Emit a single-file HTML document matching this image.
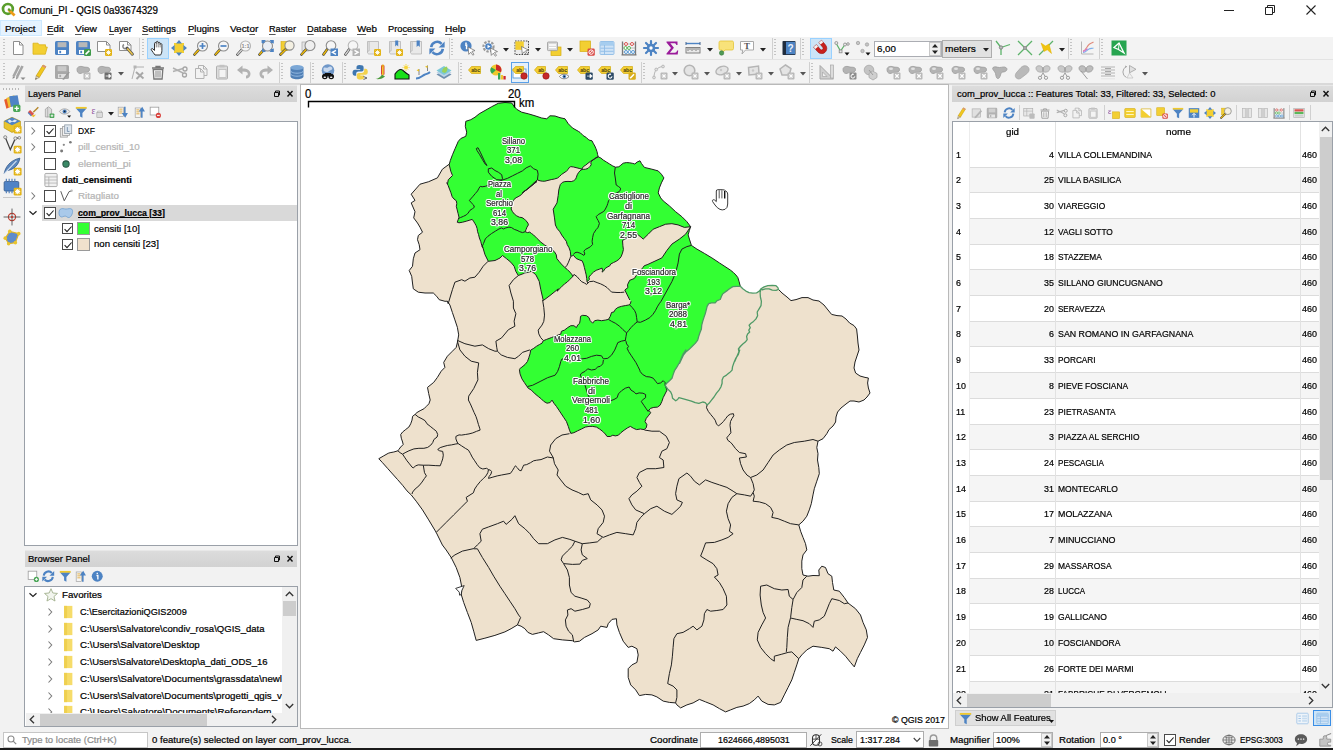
<!DOCTYPE html>
<html lang="en"><head><meta charset="utf-8"><title>Comuni_PI - QGIS 0a93674329</title>
<style>
html,body{margin:0;padding:0;background:#f2f2f2;}
body{width:1333px;height:750px;overflow:hidden;position:relative;font-family:"Liberation Sans",sans-serif;}
#app{position:absolute;left:0;top:0;width:1333px;height:750px;overflow:hidden;background:#f2f2f2;}
.b{position:absolute;box-sizing:border-box;}
.i{position:absolute;overflow:visible;}
.t{position:absolute;white-space:pre;line-height:14px;height:14px;transform-origin:0 50%;display:block;-webkit-text-stroke:0.22px currentColor;}
.t u{text-decoration:underline;text-underline-offset:1.5px;text-decoration-color:#555;}
</style></head><body><div id="app">
<div class="b " style="left:0px;top:0px;width:1333px;height:37px;background:#fff;"></div>
<svg class="i" style="left:1.05px;top:2.05px;" width="14.5" height="14.5" viewBox="0 0 16 16"><circle cx="7.6" cy="7.6" r="5.4" fill="#fff" stroke="#5a9e2c" stroke-width="3"/><path d="M8.2 8.2l6.8 6.6" stroke="#ee9b18" stroke-width="3"/><path d="M8 7.2l2.2 2.6" stroke="#5a9e2c" stroke-width="2.2"/></svg>
<span class="t " style="left:19.00px;top:3.10px;font-size:11px;color:#000;transform:scaleX(0.8915);">Comuni_PI - QGIS 0a93674329</span>
<svg class="i" style="left:1223px;top:3.5px;" width="100" height="12" viewBox="0 0 100 12"><path d="M1 6.5h10" stroke="#222" stroke-width="1" fill="none"/><path d="M42.5 3.5h7v7h-7z M44.5 3.5v-2h7v7h-2" stroke="#222" stroke-width="1" fill="none"/><path d="M83.5 1.5l9 9m0-9l-9 9" stroke="#222" stroke-width="1.1" fill="none"/></svg>
<div class="b " style="left:0px;top:20px;width:42px;height:16px;background:#e5f3ff;border:1px solid #cce8ff;"></div>
<span class="t " style="left:5.40px;top:21.50px;font-size:9.9px;color:#000;transform:scaleX(0.9932);">Pro<u>j</u>ect</span>
<span class="t " style="left:47.20px;top:21.50px;font-size:9.9px;color:#000;transform:scaleX(0.9848);"><u>E</u>dit</span>
<span class="t " style="left:75.30px;top:21.50px;font-size:9.9px;color:#000;transform:scaleX(1.0339);"><u>V</u>iew</span>
<span class="t " style="left:108.50px;top:21.50px;font-size:9.9px;color:#000;transform:scaleX(0.9167);"><u>L</u>ayer</span>
<span class="t " style="left:142.30px;top:21.50px;font-size:9.9px;color:#000;transform:scaleX(0.9477);"><u>S</u>ettings</span>
<span class="t " style="left:187.70px;top:21.50px;font-size:9.9px;color:#000;transform:scaleX(0.9609);"><u>P</u>lugins</span>
<span class="t " style="left:230.00px;top:21.50px;font-size:9.9px;color:#000;transform:scaleX(1.0084);">Vect<u>o</u>r</span>
<span class="t " style="left:269.00px;top:21.50px;font-size:9.9px;color:#000;transform:scaleX(0.9260);"><u>R</u>aster</span>
<span class="t " style="left:307.00px;top:21.50px;font-size:9.9px;color:#000;transform:scaleX(0.9368);"><u>D</u>atabase</span>
<span class="t " style="left:357.30px;top:21.50px;font-size:9.9px;color:#000;transform:scaleX(0.9913);"><u>W</u>eb</span>
<span class="t " style="left:388.30px;top:21.50px;font-size:9.9px;color:#000;transform:scaleX(0.9393);">Pro<u>c</u>essing</span>
<span class="t " style="left:445.00px;top:21.50px;font-size:9.9px;color:#000;transform:scaleX(1.0167);"><u>H</u>elp</span>
<div class="b " style="left:0px;top:37px;width:1333px;height:48px;background:#f3f3f3;"></div>
<div class="b " style="left:0px;top:59px;width:1333px;height:1px;background:#e3e3e3;"></div>
<div class="b " style="left:0px;top:83px;width:1333px;height:2px;background:#d9d9d9;"></div>
<div class="b" style="left:2.5px;top:39px;width:2px;height:18px;background:repeating-linear-gradient(#c4c4c4 0 1px,transparent 1px 3px);"></div>
<svg class="i" style="left:10.0px;top:40.0px;" width="16" height="16" viewBox="0 0 16 16"><path d="M3.5 1.5h6l3.5 3.5v9.5h-9.5z" fill="#fff" stroke="#8e8e8e" stroke-width="1"/><path d="M9.5 1.5v3.5h3.5" fill="none" stroke="#8e8e8e" stroke-width="1"/></svg>
<svg class="i" style="left:32.0px;top:40.0px;" width="16" height="16" viewBox="0 0 16 16"><path d="M1 3.2h5l1.2 1.6h6.3v2.2h1.8l-2 7.2H1z" fill="#f3cf32" stroke="#d9b21a" stroke-width="0.8"/></svg>
<svg class="i" style="left:54.0px;top:40.0px;" width="16" height="16" viewBox="0 0 16 16"><rect x="1" y="1" width="14" height="14" rx="1.6" fill="#4d83c3"/><rect x="3.6" y="2.2" width="8.8" height="5" fill="#b8b8b8"/><rect x="4" y="10" width="8" height="4" fill="#fff"/><rect x="5.3" y="10.8" width="1.8" height="2.4" fill="#4d83c3"/></svg>
<svg class="i" style="left:75.0px;top:40.0px;" width="16" height="16" viewBox="0 0 16 16"><rect x="1" y="1" width="14" height="14" rx="1.6" fill="#4d83c3"/><rect x="3.6" y="2.2" width="8.8" height="5" fill="#b8b8b8"/><rect x="4" y="10" width="8" height="4" fill="#fff"/><rect x="5.3" y="10.8" width="1.8" height="2.4" fill="#4d83c3"/><rect x="9" y="9" width="7" height="7" rx="1.3" fill="#3f9a4a"/><path d="M10.6 14.4l3.8-3.8" stroke="#fff" stroke-width="1.5"/></svg>
<svg class="i" style="left:96.0px;top:40.0px;" width="16" height="16" viewBox="0 0 16 16"><path d="M1.5 1.5h9l3.5 3.5v6.5h-12.5z" fill="#fff" stroke="#8e8e8e" stroke-width="1"/><path d="M10.5 1.5v3.5h3.5" fill="none" stroke="#8e8e8e" stroke-width="1"/><rect x="9" y="9" width="7" height="7" rx="1.2" fill="#e3b417"/><path d="M12.5 10.2v4.6M10.2 12.5h4.6M10.8 10.8l3.4 3.4M14.2 10.8l-3.4 3.4" stroke="#fff" stroke-width="0.9"/></svg>
<svg class="i" style="left:118.0px;top:40.0px;" width="16" height="16" viewBox="0 0 16 16"><path d="M1.5 1.5h8l3.5 3.5v5.5h-11.5z" fill="#fff" stroke="#8e8e8e" stroke-width="1"/><path d="M9.5 1.5v3.5h3.5" fill="none" stroke="#8e8e8e" stroke-width="1"/><path d="M6 4.5a2.2 2.2 0 1 0 3 3" fill="none" stroke="#8a8a8a" stroke-width="1.6"/><path d="M9.2 8.2l5.2 6" stroke="#555" stroke-width="3" stroke-linecap="round"/><path d="M9.8 9l4.3 5" stroke="#e8c24a" stroke-width="1.7" stroke-linecap="round"/></svg>
<div class="b " style="left:139px;top:38px;width:1px;height:21px;background:#d0d0d0;"></div>
<div class="b" style="left:141.5px;top:39px;width:2px;height:18px;background:repeating-linear-gradient(#c4c4c4 0 1px,transparent 1px 3px);"></div>
<div class="b " style="left:147px;top:38px;width:22px;height:21px;background:#cce4f7;border:1px solid #99d1ff;"></div>
<svg class="i" style="left:150.0px;top:40.0px;" width="16" height="16" viewBox="0 0 16 16"><path d="M5 15c-1.2-1.6-2.6-3.6-3.6-5-0.7-1 0.6-2 1.5-1.1l1.6 1.6V3.4c0-1.2 1.7-1.2 1.8 0V2.3c0-1.3 1.8-1.3 1.9 0v0.9c0-1.2 1.8-1.2 1.9 0v1.2c0-1.1 1.7-1.1 1.8 0v6.2c0 2-0.7 3.2-1.3 4.4z" fill="#fff" stroke="#333" stroke-width="1"/><path d="M6.3 3.4v4M8.2 2.6v4.8M10.1 3.2v4.2" stroke="#555" stroke-width="0.7"/></svg>
<svg class="i" style="left:171.0px;top:40.0px;" width="16" height="16" viewBox="0 0 16 16"><rect x="3" y="3" width="10" height="10" fill="#f3cf32"/><path d="M8 0l3 3.6H5zM8 16l3-3.6H5zM0 8l3.6-3v6zM16 8l-3.6-3v6z" fill="#4d83c3"/></svg>
<svg class="i" style="left:193.0px;top:40.0px;" width="16" height="16" viewBox="0 0 16 16"><path d="M5.9 9.6L1.5 14.5" stroke="#333" stroke-width="2.6" stroke-linecap="round"/><path d="M5.3 10.4L1.7 14.3" stroke="#e9b80f" stroke-width="1.6" stroke-linecap="round"/><circle cx="9.5" cy="6" r="5" fill="#f6f6f6" stroke="#8d8d8d" stroke-width="1.1"/><path d="M9.5 3v6M6.5 6h6" stroke="#4d83c3" stroke-width="1.7"/></svg>
<svg class="i" style="left:214.0px;top:40.0px;" width="16" height="16" viewBox="0 0 16 16"><path d="M5.9 9.6L1.5 14.5" stroke="#333" stroke-width="2.6" stroke-linecap="round"/><path d="M5.3 10.4L1.7 14.3" stroke="#e9b80f" stroke-width="1.6" stroke-linecap="round"/><circle cx="9.5" cy="6" r="5" fill="#f6f6f6" stroke="#8d8d8d" stroke-width="1.1"/><path d="M6.5 6h6" stroke="#4d83c3" stroke-width="1.7"/></svg>
<svg class="i" style="left:236.0px;top:40.0px;" width="16" height="16" viewBox="0 0 16 16"><path d="M5.9 9.6L1.5 14.5" stroke="#333" stroke-width="2.6" stroke-linecap="round"/><path d="M5.3 10.4L1.7 14.3" stroke="#cfcfcf" stroke-width="1.6" stroke-linecap="round"/><circle cx="9.5" cy="6" r="5" fill="#f6f6f6" stroke="#b5b5b5" stroke-width="1.1"/><text x="9.5" y="8" font-family="Liberation Sans,sans-serif" font-size="5.5" font-weight="700" text-anchor="middle" fill="#8a8a8a">1:1</text></svg>
<svg class="i" style="left:258.0px;top:40.0px;" width="16" height="16" viewBox="0 0 16 16"><path d="M5.9 9.6L1.5 14.5" stroke="#333" stroke-width="2.6" stroke-linecap="round"/><path d="M5.3 10.4L1.7 14.3" stroke="#e9b80f" stroke-width="1.6" stroke-linecap="round"/><circle cx="9.5" cy="6" r="5" fill="#e9eef5" stroke="#8d8d8d" stroke-width="1.1"/><path d="M4 0h4l-4 4zM15.5 0v4l-4-4zM15.5 12v-4l-4 4zM4 12h4l-4-4z" fill="#4d83c3"/><rect x="3.6" y="0" width="3" height="3" fill="#4d83c3"/><rect x="12.6" y="0" width="3" height="3" fill="#4d83c3"/><rect x="12.6" y="9" width="3" height="3" fill="#4d83c3"/></svg>
<svg class="i" style="left:279.0px;top:40.0px;" width="16" height="16" viewBox="0 0 16 16"><rect x="2" y="1.5" width="7" height="9" fill="#f3cf32" stroke="#d4ac12" stroke-width="0.6"/><path d="M6.9 9.1L1.5 14.5" stroke="#333" stroke-width="2.6" stroke-linecap="round"/><path d="M6.3 9.9L1.7 14.3" stroke="#e9b80f" stroke-width="1.6" stroke-linecap="round"/><circle cx="10.5" cy="5.5" r="4.6" fill="#f4f0e2" stroke="#8d8d8d" stroke-width="1.1"/></svg>
<svg class="i" style="left:300.0px;top:40.0px;" width="16" height="16" viewBox="0 0 16 16"><rect x="2" y="2" width="7" height="9" fill="#e4e4e4" stroke="#a8a8a8" stroke-width="0.7"/><path d="M6.4 9.1L1.5 14.5" stroke="#333" stroke-width="2.6" stroke-linecap="round"/><path d="M5.8 9.9L1.7 14.3" stroke="#e9b80f" stroke-width="1.6" stroke-linecap="round"/><circle cx="10" cy="5.5" r="5" fill="#efefef" stroke="#8d8d8d" stroke-width="1.1"/></svg>
<svg class="i" style="left:322.0px;top:40.0px;" width="16" height="16" viewBox="0 0 16 16"><path d="M5.4 9.1L1.5 14.5" stroke="#333" stroke-width="2.6" stroke-linecap="round"/><path d="M4.8 9.9L1.7 14.3" stroke="#e9b80f" stroke-width="1.6" stroke-linecap="round"/><circle cx="9" cy="5.5" r="4.8" fill="#f6f6f6" stroke="#8d8d8d" stroke-width="1.1"/><rect x="8.5" y="8.5" width="7.5" height="7.5" fill="#4d83c3"/><path d="M14 10.3l-3.6 2 3.6 2" stroke="#fff" stroke-width="1.4" fill="none"/></svg>
<svg class="i" style="left:344.0px;top:40.0px;" width="16" height="16" viewBox="0 0 16 16"><path d="M5.4 9.1L1.5 14.5" stroke="#333" stroke-width="2.6" stroke-linecap="round"/><path d="M4.8 9.9L1.7 14.3" stroke="#d0d0d0" stroke-width="1.6" stroke-linecap="round"/><circle cx="9" cy="5.5" r="4.8" fill="#f6f6f6" stroke="#b8b8b8" stroke-width="1.1"/><rect x="8.5" y="8.5" width="7.5" height="7.5" fill="#b3b3b3"/><path d="M10.5 10.3l3.6 2-3.6 2" stroke="#fff" stroke-width="1.4" fill="none"/></svg>
<svg class="i" style="left:365.0px;top:40.0px;" width="16" height="16" viewBox="0 0 16 16"><path d="M2.5 1.5h11v12.5H4.2c-1 0-1.7-0.7-1.7-1.7z" fill="#e9e9e9" stroke="#b4b4b4" stroke-width="0.8"/><path d="M2.5 12.4c0-1 0.6-1.5 1.6-1.5v-9" fill="none" stroke="#b4b4b4" stroke-width="0.8"/><rect x="9" y="9" width="7" height="7" rx="1.2" fill="#e3b417"/><path d="M12.5 10.2v4.6M10.2 12.5h4.6M10.8 10.8l3.4 3.4M14.2 10.8l-3.4 3.4" stroke="#fff" stroke-width="0.9"/></svg>
<svg class="i" style="left:387.0px;top:40.0px;" width="16" height="16" viewBox="0 0 16 16"><path d="M2.5 1.5h11v12.5H4.2c-1 0-1.7-0.7-1.7-1.7z" fill="#e9e9e9" stroke="#b4b4b4" stroke-width="0.8"/><path d="M2.5 12.4c0-1 0.6-1.5 1.6-1.5v-9" fill="none" stroke="#b4b4b4" stroke-width="0.8"/><path d="M8.2 0.5h3v6l-1.5-1.4-1.5 1.4z" fill="#4d83c3"/><rect x="9" y="9" width="7" height="7" rx="1.2" fill="#e3b417"/><path d="M12.5 10.2v4.6M10.2 12.5h4.6M10.8 10.8l3.4 3.4M14.2 10.8l-3.4 3.4" stroke="#fff" stroke-width="0.9"/></svg>
<svg class="i" style="left:408.0px;top:40.0px;" width="16" height="16" viewBox="0 0 16 16"><path d="M2.5 1.5h11v12.5H4.2c-1 0-1.7-0.7-1.7-1.7z" fill="#e9e9e9" stroke="#b4b4b4" stroke-width="0.8"/><path d="M2.5 12.4c0-1 0.6-1.5 1.6-1.5v-9" fill="none" stroke="#b4b4b4" stroke-width="0.8"/><path d="M8.6 0.5h3.2v6.4l-1.6-1.5-1.6 1.5z" fill="#4d83c3"/></svg>
<svg class="i" style="left:429.0px;top:40.0px;" width="16" height="16" viewBox="0 0 16 16"><path d="M2.2 7.2a6 6 0 0 1 10.4-3.4" fill="none" stroke="#4d83c3" stroke-width="2.6"/><path d="M15.6 1.4v6h-6z" fill="#4d83c3"/><path d="M13.8 8.8a6 6 0 0 1-10.4 3.4" fill="none" stroke="#4d83c3" stroke-width="2.6"/><path d="M0.4 14.6v-6h6z" fill="#4d83c3"/></svg>
<div class="b " style="left:449px;top:38px;width:1px;height:21px;background:#d0d0d0;"></div>
<div class="b" style="left:450.5px;top:39px;width:2px;height:18px;background:repeating-linear-gradient(#c4c4c4 0 1px,transparent 1px 3px);"></div>
<svg class="i" style="left:460.0px;top:40.0px;" width="16" height="16" viewBox="0 0 16 16"><circle cx="6" cy="6" r="5.6" fill="#4d83c3"/><path d="M5 5h1.6v4.2M6 2.6v1.4" stroke="#fff" stroke-width="1.5" fill="none"/><path d="M8 7l7 3.6-3 0.8 2 3-1.2 0.8-2-3-2 2.2z" fill="#fff" stroke="#666" stroke-width="0.7"/></svg>
<svg class="i" style="left:482.0px;top:40.0px;" width="16" height="16" viewBox="0 0 16 16"><circle cx="6.5" cy="6.5" r="5" fill="#fff" stroke="#9a9a9a" stroke-width="2.2" stroke-dasharray="2.4 1.3"/><circle cx="6.5" cy="6.5" r="3.3" fill="#4d83c3"/><path d="M5.5 4.8l3 1.7-3 1.7z" fill="#fff"/><path d="M8.5 8l7 3.6-3 0.8 2 3-1.2 0.8-2-3-2 2.2z" fill="#fff" stroke="#666" stroke-width="0.7"/></svg>
<svg class="i" style="left:514.0px;top:40.0px;" width="16" height="16" viewBox="0 0 16 16"><rect x="1" y="1" width="13.5" height="13.5" fill="#ececec" stroke="#333" stroke-width="0.9" stroke-dasharray="1.6 1.1"/><rect x="1.4" y="1.4" width="8.4" height="8.4" fill="#f3cf32"/><path d="M7.5 6.5l7 3.6-3 0.8 2 3-1.2 0.8-2-3-2 2.2z" fill="#fff" stroke="#666" stroke-width="0.7"/></svg>
<svg class="i" style="left:546.0px;top:40.0px;" width="16" height="16" viewBox="0 0 16 16"><rect x="5" y="7" width="10" height="8.5" fill="#f3cf32" stroke="#d3ab10" stroke-width="0.7"/><rect x="1.5" y="2" width="10" height="8.6" rx="0.8" fill="#d9d9d9" stroke="#9a9a9a" stroke-width="0.8"/><path d="M3 5h7M3 7.6h7" stroke="#fff" stroke-width="1.3"/></svg>
<svg class="i" style="left:579.0px;top:40.0px;" width="16" height="16" viewBox="0 0 16 16"><rect x="1" y="1" width="10.5" height="10.5" fill="#f3cf32" stroke="#d3ab10" stroke-width="0.7"/><rect x="8.5" y="8.5" width="7.3" height="7.3" rx="1.4" fill="#d94a45"/><circle cx="12.1" cy="12.1" r="2.2" fill="none" stroke="#fff" stroke-width="1"/><path d="M10.6 13.6l3-3" stroke="#fff" stroke-width="1"/></svg>
<svg class="i" style="left:599.0px;top:40.0px;" width="16" height="16" viewBox="0 0 16 16"><rect x="1" y="1.5" width="14" height="13" rx="1" fill="#cfe3f6" stroke="#8fbce6" stroke-width="0.9"/><path d="M1 5h14M5.5 5v9.5M1.5 8.2h13M1.5 11.3h13" stroke="#8fbce6" stroke-width="0.9"/><rect x="1.5" y="2" width="13" height="3" fill="#a6cdef"/></svg>
<svg class="i" style="left:621.0px;top:40.0px;" width="16" height="16" viewBox="0 0 16 16"><path d="M1.5 1.5v13M14.5 1.5v13M0.5 14.8h15" stroke="#777" stroke-width="1.3"/><path d="M1.5 4h13M1.5 8h13M1.5 12h13" stroke="#999" stroke-width="0.6"/><circle cx="5" cy="4" r="1.5" fill="#fff" stroke="#d9534f" stroke-width="1"/><circle cx="11" cy="4" r="1.5" fill="#fff" stroke="#d9534f" stroke-width="1"/><circle cx="4.5" cy="8" r="1.5" fill="#fff" stroke="#5cb85c" stroke-width="1"/><circle cx="8" cy="8" r="1.5" fill="#fff" stroke="#5cb85c" stroke-width="1"/><circle cx="5" cy="12" r="1.5" fill="#fff" stroke="#5b9bd5" stroke-width="1"/><circle cx="8.5" cy="12" r="1.5" fill="#fff" stroke="#5b9bd5" stroke-width="1"/><circle cx="12" cy="12" r="1.5" fill="#fff" stroke="#5b9bd5" stroke-width="1"/></svg>
<svg class="i" style="left:643.0px;top:40.0px;" width="16" height="16" viewBox="0 0 16 16"><g stroke="#4d83c3" stroke-width="2.2" stroke-linecap="round"><path d="M8 1v14M1 8h14M3 3l10 10M13 3L3 13"/></g><circle cx="8" cy="8" r="4.3" fill="#4d83c3"/><circle cx="8" cy="8" r="1.7" fill="#fff"/></svg>
<svg class="i" style="left:664.0px;top:40.0px;" width="16" height="16" viewBox="0 0 16 16"><path d="M2.5 1.5h11v3.6h-1.2c-0.2-1.3-0.8-1.8-2.2-1.8H6.3l3.6 4.5-4 5h4.8c1.4 0 2-0.6 2.3-2.2h1.2l-0.5 4H2.5v-1l4.5-5.6-4.5-5.6z" fill="#9a1a9a"/></svg>
<svg class="i" style="left:685.0px;top:40.0px;" width="16" height="16" viewBox="0 0 16 16"><path d="M1 3.5h14" stroke="#4d83c3" stroke-width="1.4"/><path d="M1 2v3M15 2v3" stroke="#44648f" stroke-width="1"/><rect x="1" y="7.5" width="14" height="5.5" fill="#e8e8e8" stroke="#777" stroke-width="0.9"/><path d="M3 8v3M5 8v2M7 8v3M9 8v2M11 8v3M13 8v2" stroke="#666" stroke-width="0.8"/></svg>
<svg class="i" style="left:718.0px;top:40.0px;" width="16" height="16" viewBox="0 0 16 16"><path d="M2.5 1h11.5c1 0 1.5 0.6 1.5 1.5v6c0 1-0.6 1.5-1.5 1.5H7l-3 3.2V10H2.5C1.5 10 1 9.400 1 8.500v-6C1 1.600 1.600 1 2.500 1z" fill="#f8e27a" stroke="#e3c436" stroke-width="0.8"/><circle cx="3.6" cy="13" r="2.2" fill="#4f9a55" stroke="#3b7a42" stroke-width="0.6"/></svg>
<svg class="i" style="left:739.0px;top:40.0px;" width="16" height="16" viewBox="0 0 16 16"><path d="M1.5 1.5h13v8.5H6.5l-3.500 4 0.800-4H1.500z" fill="#fff" stroke="#a9a9a9" stroke-width="1"/><text x="8" y="8.6" font-family="Liberation Serif,serif" font-size="9" font-weight="700" text-anchor="middle" fill="#555">T</text></svg>
<svg class="i" style="left:503px;top:47.5px;" width="6" height="4" viewBox="0 0 6 4"><path d="M0 0h6l-3 3.5z" fill="#222"/></svg>
<svg class="i" style="left:535px;top:47.5px;" width="6" height="4" viewBox="0 0 6 4"><path d="M0 0h6l-3 3.5z" fill="#222"/></svg>
<svg class="i" style="left:567px;top:47.5px;" width="6" height="4" viewBox="0 0 6 4"><path d="M0 0h6l-3 3.5z" fill="#222"/></svg>
<svg class="i" style="left:707px;top:47.5px;" width="6" height="4" viewBox="0 0 6 4"><path d="M0 0h6l-3 3.5z" fill="#222"/></svg>
<svg class="i" style="left:760px;top:47.5px;" width="6" height="4" viewBox="0 0 6 4"><path d="M0 0h6l-3 3.5z" fill="#222"/></svg>
<div class="b " style="left:772px;top:38px;width:1px;height:21px;background:#d0d0d0;"></div>
<div class="b" style="left:773.5px;top:39px;width:2px;height:18px;background:repeating-linear-gradient(#c4c4c4 0 1px,transparent 1px 3px);"></div>
<svg class="i" style="left:781.0px;top:40.0px;" width="16" height="16" viewBox="0 0 16 16"><rect x="1.5" y="1" width="13" height="14" rx="0.8" fill="#1f2c3d"/><rect x="5" y="1.8" width="9" height="12.400" fill="#4d83c3"/><text x="9.600" y="11.500" font-family="Liberation Sans,sans-serif" font-size="10" font-weight="700" text-anchor="middle" fill="#e8f0fa">?</text></svg>
<div class="b " style="left:800px;top:38px;width:1px;height:21px;background:#d0d0d0;"></div>
<div class="b" style="left:801.5px;top:39px;width:2px;height:18px;background:repeating-linear-gradient(#c4c4c4 0 1px,transparent 1px 3px);"></div>
<div class="b " style="left:810px;top:38px;width:22px;height:21px;background:#cce4f7;border:1px solid #99d1ff;"></div>
<svg class="i" style="left:813.0px;top:40.0px;" width="16" height="16" viewBox="0 0 16 16"><path d="M3.200 7.800l3-3 3.600 3.600a1.900 1.900 0 0 0 2.700-2.700L8.900 2.100l3-3" fill="none"/><g transform="rotate(-40 8 8)"><path d="M3 2.500h3.600v6a1.600 1.600 0 0 0 3.200 0v-6H13.400v6.200a5.200 5.200 0 0 1-10.400 0z" fill="#c8201c" stroke="#9c1512" stroke-width="0.6"/><rect x="3" y="2.500" width="3.600" height="2.600" fill="#f2f2f2"/><rect x="9.800" y="2.500" width="3.600" height="2.600" fill="#f2f2f2"/></g></svg>
<svg class="i" style="left:834.0px;top:40.0px;" width="16" height="16" viewBox="0 0 16 16"><path d="M2 3l4.500 8L11 4.500l3.500-0.500" fill="none" stroke="#5db36a" stroke-width="1.200"/><g fill="#e6e6e6" stroke="#8a8a8a" stroke-width="0.800"><circle cx="2.300" cy="3" r="1.500"/><circle cx="11" cy="4.500" r="1.500"/><circle cx="14" cy="4" r="1.300"/><rect x="5.200" y="10" width="2.800" height="2.800"/></g><path d="M10.500 12.500h5l-2.500 3z" fill="#111"/></svg>
<svg class="i" style="left:855.0px;top:40.0px;" width="16" height="16" viewBox="0 0 16 16"><g fill="#c4c4c4" stroke="#9d9d9d" stroke-width="0.700"><circle cx="3" cy="3" r="1.700"/><circle cx="12" cy="4.500" r="1.700"/><circle cx="7.500" cy="11" r="1.700"/></g><path d="M10.500 12.500h5l-2.500 3z" fill="#111"/></svg>
<div class="b " style="left:874px;top:41px;width:68px;height:16px;background:#fff;border:1px solid #abadb3;"></div>
<span class="t " style="left:877.00px;top:42.00px;font-size:9.9px;color:#000;transform:scaleX(0.9862);">6,00</span>
<div class="b " style="left:929px;top:42px;width:12px;height:14px;background:#f0f0f0;border:1px solid #c8c8c8;"></div>
<svg class="i" style="left:931px;top:43px;" width="8" height="12" viewBox="0 0 8 12"><path d="M1 4.5l3-3.5 3 3.5z M1 7.5l3 3.5 3-3.5z" fill="#222"/></svg>
<div class="b " style="left:942px;top:40px;width:50px;height:18px;background:#e1e1e1;border:1px solid #adadad;"></div>
<span class="t " style="left:945.00px;top:42.00px;font-size:9.9px;color:#000;transform:scaleX(1.0247);">meters</span>
<svg class="i" style="left:983px;top:47.5px;" width="6" height="4" viewBox="0 0 6 4"><path d="M0 0h6l-3 3.5z" fill="#222"/></svg>
<svg class="i" style="left:995.0px;top:40.0px;" width="16" height="16" viewBox="0 0 16 16"><path d="M1 1l5 6.500V15M6 7.500l9-3" fill="none" stroke="#5db36a" stroke-width="1.300"/><circle cx="6" cy="7.500" r="1.700" fill="#bdbdbd" stroke="#777" stroke-width="0.800"/></svg>
<svg class="i" style="left:1017.0px;top:40.0px;" width="16" height="16" viewBox="0 0 16 16"><path d="M1 1l14 14M15 1L1 15" fill="none" stroke="#5db36a" stroke-width="1.300"/><rect x="6.500" y="6.500" width="3" height="3" fill="#a5a5a5" stroke="#888" stroke-width="0.600"/></svg>
<svg class="i" style="left:1038.0px;top:40.0px;" width="16" height="16" viewBox="0 0 16 16"><path d="M1 15L15 1" stroke="#5db36a" stroke-width="1.300"/><path d="M3 3l4.500 3 3.500-2 2.500 9.500-4.200-3.700-3.300 1.600z" fill="#f1c40f" stroke="#e0b000" stroke-width="0.500"/></svg>
<svg class="i" style="left:1059px;top:47.5px;" width="6" height="4" viewBox="0 0 6 4"><path d="M0 0h6l-3 3.5z" fill="#222"/></svg>
<div class="b " style="left:1068px;top:38px;width:1px;height:21px;background:#d0d0d0;"></div>
<div class="b" style="left:1069.5px;top:39px;width:2px;height:18px;background:repeating-linear-gradient(#c4c4c4 0 1px,transparent 1px 3px);"></div>
<svg class="i" style="left:1079.0px;top:40.0px;" width="16" height="16" viewBox="0 0 16 16"><path d="M2.500 1.500v12.500h12" fill="none" stroke="#b5b5b5" stroke-width="1"/><path d="M4 11c3-0.500 4-5 6-6.500 1.500-1.200 3-1.500 4.500-2.500" fill="none" stroke="#e08a7a" stroke-width="1.100"/><path d="M4 12.500c3 0 4-2.500 6-3.500 1.500-0.800 3-0.500 4.500-1" fill="none" stroke="#7fb0ea" stroke-width="1.100"/><path d="M4 11.500c2-0.500 3-2 4.500-2.800" fill="none" stroke="#d070d0" stroke-width="1.100"/></svg>
<div class="b " style="left:1099px;top:38px;width:1px;height:21px;background:#d0d0d0;"></div>
<div class="b" style="left:1100.5px;top:39px;width:2px;height:18px;background:repeating-linear-gradient(#c4c4c4 0 1px,transparent 1px 3px);"></div>
<svg class="i" style="left:1111.0px;top:40.0px;" width="16" height="16" viewBox="0 0 16 16"><rect x="0.500" y="0.500" width="15" height="15" fill="#27a550"/><path d="M3 7.500l5-4.500 5 10-5.500-3.500z" fill="none" stroke="#fff" stroke-width="1.300"/><path d="M8 3l-0.500 6.500" stroke="#fff" stroke-width="0.900"/></svg>
<div class="b" style="left:2.5px;top:63px;width:2px;height:18px;background:repeating-linear-gradient(#c4c4c4 0 1px,transparent 1px 3px);"></div>
<svg class="i" style="left:10.0px;top:64.0px;" width="16" height="16" viewBox="0 0 16 16"><g stroke="#a5a5a5" stroke-width="2.600" stroke-linecap="butt"><path d="M9 1.500L3.500 12.500"/><path d="M12.500 2L7 13"/></g><path d="M2.500 15l0.400-2.800 2.200 1.100zM6 15.500l0.400-2.800 2.200 1.100z" fill="#8c8c8c"/><path d="M10.500 13.500h5l-2.500 2.500z" fill="#8a8a8a"/></svg>
<svg class="i" style="left:32.0px;top:64.0px;" width="16" height="16" viewBox="0 0 16 16"><path d="M11 1l3 1.600-6.800 11-3-1.800z" fill="#f1c81e" stroke="#c99e08" stroke-width="0.700"/><path d="M4.200 11.800l3 1.800-3.700 2z" fill="#e9d8b0" stroke="#8a7a55" stroke-width="0.500"/><path d="M3.500 15.600l0.300-1.500 1 0.700z" fill="#333"/><path d="M11 1l3 1.600-0.800 1.300-3-1.700z" fill="#d98a8a"/></svg>
<svg class="i" style="left:54.0px;top:64.0px;" width="16" height="16" viewBox="0 0 16 16"><rect x="1" y="1" width="14" height="14" rx="1.6" fill="#a8a8a8"/><rect x="3.6" y="2.2" width="8.8" height="5" fill="#c9c9c9"/><rect x="4" y="10" width="8" height="4" fill="#e0e0e0"/><rect x="5.3" y="10.8" width="1.8" height="2.4" fill="#a8a8a8"/><path d="M9 14.500l5.500-7 1.300 1-5.500 7-1.800 0.500z" fill="#9a9a9a"/></svg>
<svg class="i" style="left:75.0px;top:64.0px;" width="16" height="16" viewBox="0 0 16 16"><path d="M2 5.5c0-3 3.5-3.6 6-2.7 2.6 0.9 6-0.4 6.5 2.4 0.4 2.8-2.6 3.3-4.6 3.1-2.2-0.2-3 1.4-5 1.2-2-0.2-2.9-2-2.9-4z" fill="#b4b4b4" stroke="#9c9c9c" stroke-width="0.8"/><rect x="8.5" y="8.5" width="7" height="7" rx="1" fill="#b9b9b9"/><path d="M12.0 9.7v4.6M9.7 12.0h4.6M10.3 10.3l3.4 3.4M13.7 10.3l-3.4 3.4" stroke="#fff" stroke-width="0.9"/></svg>
<svg class="i" style="left:96.0px;top:64.0px;" width="16" height="16" viewBox="0 0 16 16"><path d="M2 5.5c0-3 3.5-3.6 6-2.7 2.6 0.9 6-0.4 6.5 2.4 0.4 2.8-2.6 3.3-4.6 3.1-2.2-0.2-3 1.4-5 1.2-2-0.2-2.9-2-2.9-4z" fill="#b4b4b4" stroke="#9c9c9c" stroke-width="0.8"/><rect x="8.5" y="8.5" width="7" height="7" rx="1" fill="#6e6e6e"/><path d="M9.7 12.0h3.2v-1.8l2 1.8-2 1.8v-1.8" fill="#fff" stroke="#fff" stroke-width="0.8"/></svg>
<svg class="i" style="left:129.0px;top:64.0px;" width="16" height="16" viewBox="0 0 16 16"><path d="M3 15L6 3h9" fill="none" stroke="#b0b0b0" stroke-width="1"/><rect x="4.500" y="1.500" width="3" height="3" fill="#b5b5b5"/><path d="M7 8l7.500 6.500M14 8.500L7.500 15" stroke="#a8a8a8" stroke-width="2"/></svg>
<svg class="i" style="left:150.0px;top:64.0px;" width="16" height="16" viewBox="0 0 16 16"><path d="M2 4h12M6 4V2.500h4V4" fill="none" stroke="#777" stroke-width="1.300"/><path d="M3.200 5.500h9.600l-0.700 9.500H3.900z" fill="#f4f4f4" stroke="#777" stroke-width="1.300"/><path d="M6 7v6.500M8 7v6.500M10 7v6.500" stroke="#8a8a8a" stroke-width="1"/></svg>
<svg class="i" style="left:172.0px;top:64.0px;" width="16" height="16" viewBox="0 0 16 16"><path d="M1 4l10 5M1 7.500l10-3" stroke="#b0b0b0" stroke-width="1.400"/><circle cx="13" cy="5" r="2" fill="none" stroke="#a5a5a5" stroke-width="1.300"/><circle cx="12.500" cy="11" r="2" fill="none" stroke="#a5a5a5" stroke-width="1.300"/></svg>
<svg class="i" style="left:193.0px;top:64.0px;" width="16" height="16" viewBox="0 0 16 16"><path d="M5.5 1.5h5l3.5 3.5v6.5h-8.5z" fill="#f2f2f2" stroke="#b3b3b3" stroke-width="1"/><path d="M10.5 1.5v3.5h3.5" fill="none" stroke="#b3b3b3" stroke-width="1"/><path d="M2.5 4.5h5l3.5 3.5v6.5h-8.5z" fill="#f2f2f2" stroke="#b3b3b3" stroke-width="1"/><path d="M7.5 4.5v3.5h3.5" fill="none" stroke="#b3b3b3" stroke-width="1"/></svg>
<svg class="i" style="left:214.0px;top:64.0px;" width="16" height="16" viewBox="0 0 16 16"><rect x="2.500" y="2" width="11" height="13" rx="1" fill="#dcdcdc" stroke="#b0b0b0" stroke-width="1"/><rect x="5.500" y="0.800" width="5" height="2.600" fill="#c2c2c2"/><rect x="5" y="5.500" width="7" height="8" fill="#f4f4f4" stroke="#b8b8b8" stroke-width="0.700"/></svg>
<svg class="i" style="left:236.0px;top:64.0px;" width="16" height="16" viewBox="0 0 16 16"><path d="M1 6l5.500-4.500v3c5 0 8 2 8 5.500 0 2.500-2 4.500-4.500 4.500v-3c1.200 0 1.800-0.600 1.800-1.600 0-1.500-1.500-2.300-5.300-2.300v3z" fill="#b2b2b2"/></svg>
<svg class="i" style="left:258.0px;top:64.0px;" width="16" height="16" viewBox="0 0 16 16"><path d="M15 6L9.500 1.500v3c-5 0-8 2-8 5.500 0 2.500 2 4.500 4.500 4.500v-3c-1.200 0-1.800-0.600-1.800-1.600 0-1.500 1.500-2.300 5.300-2.300v3z" fill="#b2b2b2"/></svg>
<svg class="i" style="left:118px;top:71.5px;" width="6" height="4" viewBox="0 0 6 4"><path d="M0 0h6l-3 3.5z" fill="#555"/></svg>
<div class="b " style="left:279px;top:62px;width:1px;height:21px;background:#d0d0d0;"></div>
<div class="b" style="left:280.5px;top:63px;width:2px;height:18px;background:repeating-linear-gradient(#c4c4c4 0 1px,transparent 1px 3px);"></div>
<svg class="i" style="left:289.0px;top:64.0px;" width="16" height="16" viewBox="0 0 16 16"><path d="M1.500 3.500v9c0 1.500 3 2.700 6.500 2.700s6.500-1.200 6.500-2.700v-9z" fill="#4f7fb5"/><ellipse cx="8" cy="3.500" rx="6.500" ry="2.600" fill="#7ba7d6"/><path d="M1.500 6.500c0 1.500 3 2.700 6.500 2.700s6.500-1.200 6.500-2.700M1.500 9.500c0 1.500 3 2.700 6.500 2.700s6.500-1.200 6.500-2.700" fill="none" stroke="#9cc0e6" stroke-width="0.900"/></svg>
<div class="b " style="left:310px;top:62px;width:1px;height:21px;background:#d0d0d0;"></div>
<div class="b" style="left:311.5px;top:63px;width:2px;height:18px;background:repeating-linear-gradient(#c4c4c4 0 1px,transparent 1px 3px);"></div>
<svg class="i" style="left:320.0px;top:64.0px;" width="16" height="16" viewBox="0 0 16 16"><circle cx="8" cy="6.500" r="6.300" fill="#6f97c8"/><path d="M3.500 4c2-1.500 3 0.500 4.500-0.500s2.500-1.500 4 0c1 1.500-0.500 2.500-2 3s-2 2-3.500 1.500S4 7.500 3.500 6.500z" fill="#c9d9ee"/><circle cx="4.800" cy="12.500" r="2.800" fill="#111"/><circle cx="11.200" cy="12.500" r="2.800" fill="#111"/><rect x="5" y="9" width="6" height="3" fill="#111"/><ellipse cx="4.800" cy="13.300" rx="1.300" ry="0.700" fill="#fff"/><ellipse cx="11.200" cy="13.300" rx="1.300" ry="0.700" fill="#fff"/></svg>
<div class="b " style="left:342px;top:62px;width:1px;height:21px;background:#d0d0d0;"></div>
<div class="b" style="left:343.5px;top:63px;width:2px;height:18px;background:repeating-linear-gradient(#c4c4c4 0 1px,transparent 1px 3px);"></div>
<svg class="i" style="left:352.0px;top:64.0px;" width="16" height="16" viewBox="0 0 16 16"><path d="M7.500 1c-2.500 0-3 1-3 2.300V5h3.700v0.800H3c-1.500 0-2.500 1-2.500 3s1 3 2.300 3h1.400V9.800c0-1.400 1.100-2.300 2.400-2.300h3c1.200 0 2-0.800 2-2V3.300c0-1.400-1.200-2.300-4.100-2.300z" fill="#3f77b0"/><path d="M9 15.500c2.500 0 3-1 3-2.300v-1.700H8.300v-0.800h5.200c1.500 0 2.300-1 2.300-3s-0.900-3-2.200-3h-1.400v1.900c0 1.400-1.100 2.400-2.400 2.400h-3c-1.200 0-2 0.800-2 2v2.200c0 1.400 1.200 2.300 4.200 2.300z" fill="#f3d24c"/><path d="M11.500 12.500l3.500 1.500-3.500 1.500" fill="none" stroke="#555" stroke-width="0.900"/></svg>
<svg class="i" style="left:374.0px;top:64.0px;" width="16" height="16" viewBox="0 0 16 16"><path d="M1.500 15c3-0.500 5-2 6.500-4.500l3 2c-2 2-5 3-9.500 2.500z" fill="#4c9a3c"/><path d="M7 2c0-1.500 3.500-1.500 3.500 0v8c0 1.500-3.500 1.500-3.500 0z" fill="#d9443a"/><path d="M8 1.500h1.600v9.500H8z" fill="#f0c92c"/><circle cx="8.800" cy="1.800" r="1.300" fill="#e8a020"/></svg>
<svg class="i" style="left:394.0px;top:64.0px;" width="16" height="16" viewBox="0 0 16 16"><path d="M1 15V10c2-3 4.500-4.500 6-4.500 2 0 4.500 4 8 5.500v4z" fill="#19e019" stroke="#111" stroke-width="1.100"/><circle cx="12" cy="3.500" r="2" fill="#f7d63a"/><g stroke="#f4cf2a" stroke-width="0.800"><path d="M12 0v1M12 6v1M8.500 3.500h1M14.500 3.500h1M9.600 1.100l0.700 0.700M13.700 5.200l0.700 0.700M14.400 1.100l-0.700 0.700M10.300 5.200l-0.700 0.700"/></g></svg>
<svg class="i" style="left:415.0px;top:64.0px;" width="16" height="16" viewBox="0 0 16 16"><path d="M1 14.500c4 0 5-2 8-3.500s4-1 6-3" fill="none" stroke="#4d83c3" stroke-width="2"/><path d="M4 11V5M12.500 7V1.500" stroke="#777" stroke-width="0.900"/><path d="M4 5l-2.500 1.300L4 7.600zM12.500 1.500L10 2.800l2.500 1.300z" fill="#e8c020"/></svg>
<svg class="i" style="left:436.0px;top:64.0px;" width="16" height="16" viewBox="0 0 16 16"><path d="M8 15L0.500 10.500 8 6l7.500 4.500z" fill="#6f8fae"/><path d="M8 13L0.500 8.500 8 4l7.500 4.500z" fill="#bcd3e8"/><path d="M8 11L0.500 6.500 8 2l7.500 4.500z" fill="#7cc8d8"/><path d="M6 8c0-3 2-5 5-5.500 1 2 0.500 5-2 6.500z" fill="#9ad25a"/></svg>
<div class="b " style="left:458px;top:62px;width:1px;height:21px;background:#d0d0d0;"></div>
<div class="b" style="left:459.5px;top:63px;width:2px;height:18px;background:repeating-linear-gradient(#c4c4c4 0 1px,transparent 1px 3px);"></div>
<div class="b " style="left:511px;top:62px;width:18px;height:20.5px;background:#e6f0fa;border:1px solid #5aa0e8;"></div>
<svg class="i" style="left:468.0px;top:64.0px;" width="16" height="16" viewBox="0 0 16 16"><path d="M0.5 6l3-3.5h9v7h-9z" fill="#f3cf32" stroke="#d1a90e" stroke-width="0.7"/><text x="7.7" y="8" font-family="Liberation Sans,sans-serif" font-size="5.2" font-weight="700" text-anchor="middle" fill="#4a4211">abc</text></svg>
<svg class="i" style="left:490.0px;top:64.0px;" width="16" height="16" viewBox="0 0 16 16"><circle cx="6" cy="6" r="5.500" fill="#f0c92c"/><path d="M6 6V0.500a5.500 5.500 0 0 1 5 7.700z" fill="#cc2a2a"/><path d="M6 6L2 9.800A5.500 5.500 0 0 1 1.200 3.200z" fill="#35a853"/><rect x="8" y="9" width="2.300" height="6.500" fill="#35a853"/><rect x="10.800" y="11" width="2.300" height="4.500" fill="#f0c92c"/><rect x="13.400" y="12" width="2.300" height="3.500" fill="#cc2a2a"/></svg>
<svg class="i" style="left:512.0px;top:64.0px;" width="16" height="16" viewBox="0 0 16 16"><rect x="1" y="5" width="13" height="9" fill="#fff" stroke="#5b9bd5" stroke-width="0.900"/><path d="M0.5 6l3-3.5h8v7h-8z" fill="#f3cf32" stroke="#d1a90e" stroke-width="0.7"/><text x="7.2" y="8" font-family="Liberation Sans,sans-serif" font-size="5.2" font-weight="700" text-anchor="middle" fill="#4a4211">ab</text><path d="M12 7v3" stroke="#ddd" stroke-width="1.400"/><circle cx="12" cy="12" r="3.200" fill="#c62828" stroke="#8e1414" stroke-width="0.600"/></svg>
<svg class="i" style="left:534.0px;top:64.0px;" width="16" height="16" viewBox="0 0 16 16"><path d="M0.5 6l3-3.5h8v7h-8z" fill="#f3cf32" stroke="#d1a90e" stroke-width="0.7"/><text x="7.2" y="8" font-family="Liberation Sans,sans-serif" font-size="5.2" font-weight="700" text-anchor="middle" fill="#4a4211">ab</text><path d="M12 7v3" stroke="#ddd" stroke-width="1.400"/><circle cx="12" cy="12" r="3.200" fill="#c62828" stroke="#8e1414" stroke-width="0.600"/></svg>
<svg class="i" style="left:555.0px;top:64.0px;" width="16" height="16" viewBox="0 0 16 16"><path d="M0.5 6l3-3.5h9v7h-9z" fill="#f3cf32" stroke="#d1a90e" stroke-width="0.7"/><text x="7.7" y="8" font-family="Liberation Sans,sans-serif" font-size="5.2" font-weight="700" text-anchor="middle" fill="#4a4211">abc</text><path d="M4.500 12.500c2-3 7-3 9.500 0-2.500 3-7.500 3-9.500 0z" fill="#fff" stroke="#555" stroke-width="0.700"/><circle cx="9.300" cy="12.500" r="1.800" fill="#4d83c3"/><circle cx="9.300" cy="12.500" r="0.800" fill="#123"/></svg>
<svg class="i" style="left:577.0px;top:64.0px;" width="16" height="16" viewBox="0 0 16 16"><path d="M0.5 6l3-3.5h9v7h-9z" fill="#f3cf32" stroke="#d1a90e" stroke-width="0.7"/><text x="7.7" y="8" font-family="Liberation Sans,sans-serif" font-size="5.2" font-weight="700" text-anchor="middle" fill="#4a4211">abc</text><rect x="8.500" y="8.500" width="7.300" height="7.300" rx="1.300" fill="#2c4a66"/><path d="M10 12.100h3v-1.900l2.300 1.900-2.300 1.900v-1.900" fill="#fff" stroke="#fff" stroke-width="0.700"/></svg>
<svg class="i" style="left:598.0px;top:64.0px;" width="16" height="16" viewBox="0 0 16 16"><path d="M0.5 6l3-3.5h9v7h-9z" fill="#f3cf32" stroke="#d1a90e" stroke-width="0.7"/><text x="7.7" y="8" font-family="Liberation Sans,sans-serif" font-size="5.2" font-weight="700" text-anchor="middle" fill="#4a4211">abc</text><rect x="8.500" y="8.500" width="7.300" height="7.300" rx="1.300" fill="#2c4a66"/><path d="M14 12.300a1.900 1.900 0 1 1-1.800-2" fill="none" stroke="#fff" stroke-width="1.100"/><path d="M11.700 9.100l1.700 1.200-1.700 1.200z" fill="#fff"/></svg>
<svg class="i" style="left:620.0px;top:64.0px;" width="16" height="16" viewBox="0 0 16 16"><path d="M0.5 6l3-3.5h9v7h-9z" fill="#f3cf32" stroke="#d1a90e" stroke-width="0.7"/><text x="7.7" y="8" font-family="Liberation Sans,sans-serif" font-size="5.2" font-weight="700" text-anchor="middle" fill="#4a4211">abc</text><rect x="8.500" y="8.500" width="7.300" height="7.300" rx="1.300" fill="#d9ae1a"/><path d="M10.200 14.200l3.800-3.900" stroke="#fff" stroke-width="1.600"/></svg>
<div class="b " style="left:641px;top:62px;width:1px;height:21px;background:#d0d0d0;"></div>
<div class="b" style="left:642.5px;top:63px;width:2px;height:18px;background:repeating-linear-gradient(#c4c4c4 0 1px,transparent 1px 3px);"></div>
<svg class="i" style="left:652.0px;top:64.0px;" width="16" height="16" viewBox="0 0 16 16"><path d="M2 13.500C2 7 5 3 11 2.500" fill="none" stroke="#b5b5b5" stroke-width="1"/><circle cx="2" cy="13.500" r="1.400" fill="#e0e0e0" stroke="#aaa" stroke-width="0.700"/><circle cx="4.200" cy="5.500" r="1.400" fill="#e0e0e0" stroke="#aaa" stroke-width="0.700"/><circle cx="11" cy="2.500" r="1.400" fill="#e0e0e0" stroke="#aaa" stroke-width="0.700"/><rect x="8.5" y="8.5" width="7" height="7" rx="1" fill="#b9b9b9"/><path d="M12.0 9.7v4.6M9.7 12.0h4.6M10.3 10.3l3.4 3.4M13.7 10.3l-3.4 3.4" stroke="#fff" stroke-width="0.9"/></svg>
<svg class="i" style="left:683.0px;top:64.0px;" width="16" height="16" viewBox="0 0 16 16"><circle cx="6.500" cy="6.500" r="5.300" fill="#e4e4e4" stroke="#b5b5b5" stroke-width="1.600"/><rect x="8.5" y="8.5" width="7" height="7" rx="1" fill="#b9b9b9"/><path d="M12.0 9.7v4.6M9.7 12.0h4.6M10.3 10.3l3.4 3.4M13.7 10.3l-3.4 3.4" stroke="#fff" stroke-width="0.9"/></svg>
<svg class="i" style="left:715.0px;top:64.0px;" width="16" height="16" viewBox="0 0 16 16"><ellipse cx="7" cy="6.500" rx="6.300" ry="4" transform="rotate(-20 7 6.500)" fill="#e4e4e4" stroke="#b5b5b5" stroke-width="1.400"/><circle cx="6" cy="6" r="1.200" fill="#c8c8c8"/><rect x="8.5" y="8.5" width="7" height="7" rx="1" fill="#b9b9b9"/><path d="M12.0 9.7v4.6M9.7 12.0h4.6M10.3 10.3l3.4 3.4M13.7 10.3l-3.4 3.4" stroke="#fff" stroke-width="0.9"/></svg>
<svg class="i" style="left:747.0px;top:64.0px;" width="16" height="16" viewBox="0 0 16 16"><path d="M1.500 3.500l10-1.500 0.500 8-10 1z" fill="#e4e4e4" stroke="#b5b5b5" stroke-width="1.500"/><circle cx="6" cy="6.500" r="1.200" fill="#c8c8c8"/><rect x="8.5" y="8.5" width="7" height="7" rx="1" fill="#b9b9b9"/><path d="M12.0 9.7v4.6M9.7 12.0h4.6M10.3 10.3l3.4 3.4M13.7 10.3l-3.4 3.4" stroke="#fff" stroke-width="0.9"/></svg>
<svg class="i" style="left:779.0px;top:64.0px;" width="16" height="16" viewBox="0 0 16 16"><path d="M6.500 1l5.500 3.500-1.800 6.500H3L1 5z" fill="#e4e4e4" stroke="#b5b5b5" stroke-width="1.500"/><rect x="8.5" y="8.5" width="7" height="7" rx="1" fill="#b9b9b9"/><path d="M12.0 9.7v4.6M9.7 12.0h4.6M10.3 10.3l3.4 3.4M13.7 10.3l-3.4 3.4" stroke="#fff" stroke-width="0.9"/></svg>
<svg class="i" style="left:672px;top:71.5px;" width="6" height="4" viewBox="0 0 6 4"><path d="M0 0h6l-3 3.5z" fill="#555"/></svg>
<svg class="i" style="left:704px;top:71.5px;" width="6" height="4" viewBox="0 0 6 4"><path d="M0 0h6l-3 3.5z" fill="#555"/></svg>
<svg class="i" style="left:736px;top:71.5px;" width="6" height="4" viewBox="0 0 6 4"><path d="M0 0h6l-3 3.5z" fill="#555"/></svg>
<svg class="i" style="left:768px;top:71.5px;" width="6" height="4" viewBox="0 0 6 4"><path d="M0 0h6l-3 3.5z" fill="#555"/></svg>
<svg class="i" style="left:800px;top:71.5px;" width="6" height="4" viewBox="0 0 6 4"><path d="M0 0h6l-3 3.5z" fill="#555"/></svg>
<div class="b " style="left:809px;top:62px;width:1px;height:21px;background:#d0d0d0;"></div>
<div class="b" style="left:810.5px;top:63px;width:2px;height:18px;background:repeating-linear-gradient(#c4c4c4 0 1px,transparent 1px 3px);"></div>
<svg class="i" style="left:819.0px;top:64.0px;" width="16" height="16" viewBox="0 0 16 16"><path d="M1 15V1.500L14.500 15z" fill="#cfcfcf" stroke="#a8a8a8" stroke-width="1"/><path d="M3.500 12.500V8l4.500 4.500z" fill="#f0f0f0" stroke="#a8a8a8" stroke-width="0.700"/><rect x="11.500" y="1" width="3" height="13" fill="#dcdcdc" stroke="#a8a8a8" stroke-width="0.700"/></svg>
<svg class="i" style="left:841.0px;top:64.0px;" width="16" height="16" viewBox="0 0 16 16"><path d="M2 5.5c0-3 3.5-3.6 6-2.7 2.6 0.9 6-0.4 6.5 2.4 0.4 2.8-2.6 3.3-4.6 3.1-2.2-0.2-3 1.4-5 1.2-2-0.2-2.9-2-2.9-4z" fill="#b4b4b4" stroke="#9c9c9c" stroke-width="0.8"/><rect x="8.5" y="8.5" width="7" height="7" rx="1" fill="#8d8d8d"/><path d="M13.8 12.3a1.9 1.9 0 1 1-1.8-2" fill="none" stroke="#fff" stroke-width="1"/><path d="M11.5 9.1l1.6 1.2-1.6 1.2z" fill="#fff"/></svg>
<svg class="i" style="left:863.0px;top:64.0px;" width="16" height="16" viewBox="0 0 16 16"><circle cx="6" cy="6" r="4.800" fill="#c4c4c4" stroke="#a8a8a8" stroke-width="0.800"/><path d="M9.500 7l4.500 2.500v4L10 16l-4-2.500v-4z" fill="#cfcfcf" stroke="#a8a8a8" stroke-width="0.800"/><path d="M6 6l4 5" stroke="#909090" stroke-width="0.800"/></svg>
<svg class="i" style="left:885.0px;top:64.0px;" width="16" height="16" viewBox="0 0 16 16"><path d="M2 5.5c0-3 3.5-3.6 6-2.7 2.6 0.9 6-0.4 6.5 2.4 0.4 2.8-2.6 3.3-4.6 3.1-2.2-0.2-3 1.4-5 1.2-2-0.2-2.9-2-2.9-4z" fill="#b4b4b4" stroke="#9c9c9c" stroke-width="0.8"/><ellipse cx="6" cy="4.800" rx="2" ry="1.200" fill="#e2e2e2"/><rect x="8.5" y="8.5" width="7" height="7" rx="1" fill="#b9b9b9"/><path d="M10.3 10.3l3.4 3.4M13.7 10.3l-3.4 3.4" stroke="#fff" stroke-width="1.3"/></svg>
<svg class="i" style="left:907.0px;top:64.0px;" width="16" height="16" viewBox="0 0 16 16"><path d="M2 5.5c0-3 3.5-3.6 6-2.7 2.6 0.9 6-0.4 6.5 2.4 0.4 2.8-2.6 3.3-4.6 3.1-2.2-0.2-3 1.4-5 1.2-2-0.2-2.9-2-2.9-4z" fill="#b4b4b4" stroke="#9c9c9c" stroke-width="0.8"/><ellipse cx="6" cy="4.800" rx="2" ry="1.200" fill="#e2e2e2"/><rect x="8.5" y="8.5" width="7" height="7" rx="1" fill="#b9b9b9"/><path d="M10.3 10.3l3.4 3.4M13.7 10.3l-3.4 3.4" stroke="#fff" stroke-width="1.3"/></svg>
<svg class="i" style="left:928.0px;top:64.0px;" width="16" height="16" viewBox="0 0 16 16"><path d="M2 5.5c0-3 3.5-3.6 6-2.7 2.6 0.9 6-0.4 6.5 2.4 0.4 2.8-2.6 3.3-4.6 3.1-2.2-0.2-3 1.4-5 1.2-2-0.2-2.9-2-2.9-4z" fill="#b4b4b4" stroke="#9c9c9c" stroke-width="0.8"/><ellipse cx="6" cy="4.800" rx="2" ry="1.200" fill="#e2e2e2"/><rect x="8.5" y="8.5" width="7" height="7" rx="1" fill="#b9b9b9"/><path d="M10.3 10.3l3.4 3.4M13.7 10.3l-3.4 3.4" stroke="#fff" stroke-width="1.3"/></svg>
<svg class="i" style="left:950.0px;top:64.0px;" width="16" height="16" viewBox="0 0 16 16"><path d="M2 5.5c0-3 3.5-3.6 6-2.7 2.6 0.9 6-0.4 6.5 2.4 0.4 2.8-2.6 3.3-4.6 3.1-2.2-0.2-3 1.4-5 1.2-2-0.2-2.9-2-2.9-4z" fill="#b4b4b4" stroke="#9c9c9c" stroke-width="0.8"/><ellipse cx="6" cy="4.800" rx="2" ry="1.200" fill="#e2e2e2"/><rect x="8.5" y="8.5" width="7" height="7" rx="1" fill="#b9b9b9"/><path d="M10.3 10.3l3.4 3.4M13.7 10.3l-3.4 3.4" stroke="#fff" stroke-width="1.3"/></svg>
<svg class="i" style="left:972.0px;top:64.0px;" width="16" height="16" viewBox="0 0 16 16"><path d="M2 5.5c0-3 3.5-3.6 6-2.7 2.6 0.9 6-0.4 6.5 2.4 0.4 2.8-2.6 3.3-4.6 3.1-2.2-0.2-3 1.4-5 1.2-2-0.2-2.9-2-2.9-4z" fill="#b4b4b4" stroke="#9c9c9c" stroke-width="0.8"/><ellipse cx="6" cy="4.800" rx="2" ry="1.200" fill="#e2e2e2"/><rect x="8.5" y="8.5" width="7" height="7" rx="1" fill="#b9b9b9"/><path d="M10.3 10.3l3.4 3.4M13.7 10.3l-3.4 3.4" stroke="#fff" stroke-width="1.3"/></svg>
<svg class="i" style="left:992.0px;top:64.0px;" width="16" height="16" viewBox="0 0 16 16"><path d="M1 3.500c2-1.500 4 0 6.500 0s5-1.500 7 0.500c1.500 2-1 4-3.500 4-1.500 0-2 1-2.500 3s-1.500 4-3 3.500-1.500-3-2-5-4-4.500-2.500-6z" fill="#b4b4b4" stroke="#9c9c9c" stroke-width="0.8"/></svg>
<svg class="i" style="left:1014.0px;top:64.0px;" width="16" height="16" viewBox="0 0 16 16"><path d="M3 14.500c-2.500-1.500-2-4.500 0-6.500l4-4.500c2-2 5-2.500 7-0.500s1 5-1 6.500l-4.500 3.500c-2 1.700-3.500 2.600-5.500 1.500z" fill="#b9b9b9" stroke="#a2a2a2" stroke-width="0.700"/></svg>
<svg class="i" style="left:1035.0px;top:64.0px;" width="16" height="16" viewBox="0 0 16 16"><path d="M1 4c0-3 6-3 6.500 0v3.500C6 9 1 8 1 4zM15 4c0-3-6-3-6.500 0v3.500C10 9 15 8 15 4z" fill="#c9c9c9" stroke="#a5a5a5" stroke-width="0.800"/><path d="M8 3v6l-2.500 4M8 9l2.500 4" stroke="#9c9c9c" stroke-width="1" fill="none"/><circle cx="5" cy="13.800" r="1.600" fill="none" stroke="#9c9c9c" stroke-width="1"/><circle cx="11" cy="13.800" r="1.600" fill="none" stroke="#9c9c9c" stroke-width="1"/></svg>
<svg class="i" style="left:1057.0px;top:64.0px;" width="16" height="16" viewBox="0 0 16 16"><path d="M1 4c0-3 6-3 6.500 0v3.500C6 9 1 8 1 4zM15 4c0-3-6-3-6.500 0v3.500C10 9 15 8 15 4z" fill="#c9c9c9" stroke="#a5a5a5" stroke-width="0.800"/><path d="M8 3v6l-2.500 4M8 9l2.500 4" stroke="#9c9c9c" stroke-width="1" fill="none"/><circle cx="5" cy="13.800" r="1.600" fill="none" stroke="#9c9c9c" stroke-width="1"/><circle cx="11" cy="13.800" r="1.600" fill="none" stroke="#9c9c9c" stroke-width="1"/></svg>
<svg class="i" style="left:1078.0px;top:64.0px;" width="16" height="16" viewBox="0 0 16 16"><path d="M1 4c0-3 6-3 6.500 0v3.500C6 9 1 8 1 4zM15 4c0-3-6-3-6.500 0v3.500C10 9 15 8 15 4z" fill="#bdbdbd" stroke="#999" stroke-width="0.800"/><path d="M3 7l6.500 8" stroke="#9c9c9c" stroke-width="1"/></svg>
<svg class="i" style="left:1100.0px;top:64.0px;" width="16" height="16" viewBox="0 0 16 16"><rect x="1" y="1.500" width="14" height="13" fill="#f4f4f4"/><path d="M1 3h14M1 6h14M1 9h14M1 12h14" stroke="#c8c8c8" stroke-width="1.600"/><path d="M5 4.500h6M5 7.500h6M5 10.500h6" stroke="#a8a8a8" stroke-width="1"/><path d="M1.500 14.800h13" stroke="#c8c8c8" stroke-width="0.600" stroke-dasharray="1 1"/></svg>
<svg class="i" style="left:1121.0px;top:64.0px;" width="16" height="16" viewBox="0 0 16 16"><path d="M5.500 2.500a6 6 0 0 0 0 11" fill="none" stroke="#a8a8a8" stroke-width="1"/><path d="M8.500 1.500l6.500 3.800-6.500 3.500z" fill="#e0e0e0" stroke="#a8a8a8" stroke-width="0.900"/><path d="M8.500 9l-2.500 5h6z" fill="#f2f2f2" stroke="#c0c0c0" stroke-width="0.700"/><path d="M4 1.500l2.200 1-1.800 1.500z" fill="#a8a8a8"/></svg>
<svg class="i" style="left:1142px;top:71.5px;" width="6" height="4" viewBox="0 0 6 4"><path d="M0 0h6l-3 3.5z" fill="#555"/></svg>
<div class="b " style="left:0px;top:85px;width:24px;height:644px;background:#f2f2f2;"></div>
<div class="b" style="left:3px;top:88px;width:18px;height:2px;background:repeating-linear-gradient(90deg,#b8b8b8 0 1px,transparent 1px 3px);"></div>
<svg class="i" style="left:3.0px;top:94.0px;" width="18" height="18" viewBox="0 0 16 16"><path d="M1 5l7-3 2 8-7 3z" fill="#e65c2e"/><path d="M3 3.500l7-2.500 2 8-7 3z" fill="#f0c030"/><path d="M5.500 2l7.500-1 1.500 8.500-7.500 2z" fill="#4f83c6"/><rect x="9" y="9.500" width="6.500" height="6.500" rx="1.300" fill="#4aa657"/><path d="M12.200 10.800v4M10.200 12.800h4" stroke="#fff" stroke-width="1.200"/></svg>
<svg class="i" style="left:3.0px;top:114.5px;" width="18" height="18" viewBox="0 0 16 16"><path d="M1 5.500l7-3.500 7.500 3.500v6L8 15.500 1 11.500z" fill="#e9c42c" stroke="#b8930c" stroke-width="0.600"/><path d="M1 5.500l7-3.500 7.500 3.500L8 9z" fill="#4f83c6"/><path d="M4 5l2-1 2 1.500 2.500-1.500 2 1-2 1.500-2.500-0.500-2 1z" fill="#dfeaf7"/><rect x="9.5" y="9.5" width="7" height="7" rx="1.2" fill="#e3b417"/><path d="M13.0 10.7v4.6M10.7 13.0h4.6M11.3 11.3l3.4 3.4M14.7 11.3l-3.4 3.4" stroke="#fff" stroke-width="0.9"/></svg>
<svg class="i" style="left:3.0px;top:134.5px;" width="18" height="18" viewBox="0 0 16 16"><path d="M2 2l4.500 11L11 3l3.500-0.500" fill="none" stroke="#444" stroke-width="1.100"/><g fill="#e6e6e6" stroke="#777" stroke-width="0.700"><circle cx="2" cy="2" r="1.400"/><circle cx="11" cy="3" r="1.400"/><circle cx="14.500" cy="2.500" r="1.200"/></g><rect x="9.5" y="9.5" width="7" height="7" rx="1.2" fill="#e3b417"/><path d="M13.0 10.7v4.6M10.7 13.0h4.6M11.3 11.3l3.4 3.4M14.7 11.3l-3.4 3.4" stroke="#fff" stroke-width="0.9"/></svg>
<svg class="i" style="left:3.0px;top:157.0px;" width="18" height="18" viewBox="0 0 16 16"><path d="M1 15c1-6 5-12 14-14-1 6-5 10-11 11z" fill="#5a86bd" stroke="#2f5687" stroke-width="0.700"/><path d="M1 15L12 3.500" stroke="#d9e5f3" stroke-width="0.900"/><rect x="9.5" y="9.5" width="7" height="7" rx="1.2" fill="#e3b417"/><path d="M13.0 10.7v4.6M10.7 13.0h4.6M11.3 11.3l3.4 3.4M14.7 11.3l-3.4 3.4" stroke="#fff" stroke-width="0.9"/></svg>
<svg class="i" style="left:3.0px;top:176.5px;" width="18" height="18" viewBox="0 0 16 16"><rect x="1" y="4" width="13" height="8.500" rx="1" fill="#4f83c6" stroke="#2f5687" stroke-width="0.700"/><path d="M3 4V1.500M5.500 4V1.500M8 4V1.500M10.500 4V1.500M3 12.500v2M5.500 12.500v2M8 12.500v2" stroke="#5a86bd" stroke-width="1.100"/><rect x="9.5" y="9.5" width="7" height="7" rx="1.2" fill="#e3b417"/><path d="M13.0 10.7v4.6M10.7 13.0h4.6M11.3 11.3l3.4 3.4M14.7 11.3l-3.4 3.4" stroke="#fff" stroke-width="0.9"/></svg>
<svg class="i" style="left:3.0px;top:207.5px;" width="18" height="18" viewBox="0 0 16 16"><circle cx="8" cy="8" r="3.200" fill="none" stroke="#c0392b" stroke-width="1"/><path d="M8 0.500v15M0.500 8h15" stroke="#555" stroke-width="0.800"/><circle cx="8" cy="8" r="1" fill="#c0392b"/></svg>
<svg class="i" style="left:3.0px;top:228.0px;" width="18" height="18" viewBox="0 0 16 16"><path d="M2 9l4-6 8 2-3 8-6 1z" fill="#5d8ccb" stroke="#e0b422" stroke-width="1"/><g fill="#e9c42c"><circle cx="2" cy="9" r="1.600"/><circle cx="6" cy="3" r="1.600"/><circle cx="14" cy="5" r="1.600"/><circle cx="11" cy="13" r="1.600"/><circle cx="5" cy="14" r="1.600"/></g></svg>
<div class="b " style="left:3px;top:197px;width:18px;height:1px;background:#c8c8c8;"></div>
<div class="b " style="left:25px;top:85px;width:272px;height:17px;background:linear-gradient(#dcdcdc,#d2d2d2);border-top:1px solid #e8e8e8;"></div>
<span class="t " style="left:28.00px;top:86.50px;font-size:9.9px;color:#000;transform:scaleX(0.9172);">Layers Panel</span>
<svg class="i" style="left:273px;top:90px;" width="22" height="8" viewBox="0 0 22 8"><path d="M1.5 2.5h4v4h-4z M2.5 2.5v-1.5h4v4h-1" stroke="#111" stroke-width="1" fill="none"/><path d="M14.5 1l5 5.5m0-5.5l-5 5.5" stroke="#111" stroke-width="1.4" fill="none"/></svg>
<svg class="i" style="left:26.75px;top:106.25px;" width="12.5" height="12.5" viewBox="0 0 16 16"><path d="M1 8l5 5 3-3-5-5z" fill="#d9534f"/><path d="M5 12l3.500 2.500 3-3.500" fill="#f0c030"/><path d="M8 8l6.500-6.500" stroke="#b5872c" stroke-width="1.800"/><path d="M1.500 8.500l4 4" stroke="#4f83c6" stroke-width="1.500"/></svg>
<svg class="i" style="left:43.25px;top:106.25px;" width="12.5" height="12.5" viewBox="0 0 16 16"><path d="M3 4l4-3 4 3v10H3z" fill="#dcdcdc" stroke="#9a9a9a" stroke-width="0.900"/><path d="M6 1.500v13" stroke="#9a9a9a" stroke-width="0.800"/><rect x="8.500" y="9.500" width="6" height="6" rx="1" fill="#4aa657"/><path d="M11.500 10.800v3.400M9.800 12.500h3.400" stroke="#fff" stroke-width="1.100"/></svg>
<svg class="i" style="left:59.25px;top:106.25px;" width="12.5" height="12.5" viewBox="0 0 16 16"><path d="M0.500 7c3-4.500 10-4.500 13.500 0-3.500 4.500-10.500 4.500-13.500 0z" fill="#e8e8e8" stroke="#888" stroke-width="0.800"/><circle cx="7.200" cy="7" r="2.600" fill="#4d83c3"/><circle cx="7.200" cy="7" r="1.100" fill="#123"/><path d="M10.500 12h5l-2.500 3z" fill="#111"/></svg>
<svg class="i" style="left:74.75px;top:106.25px;" width="12.5" height="12.5" viewBox="0 0 16 16"><path d="M1 3h14l-5.500 6v6l-3-1.500V9z" fill="#4d83c3"/><rect x="1" y="1.200" width="14" height="2.200" fill="#f0c92c"/></svg>
<svg class="i" style="left:91.25px;top:106.25px;" width="12.5" height="12.5" viewBox="0 0 16 16"><text x="0.500" y="10" font-family="Liberation Serif,serif" font-size="12" fill="#8a4a9a">ε</text><rect x="7.500" y="8.500" width="7" height="6.500" fill="#dcdcdc" stroke="#9a9a9a" stroke-width="0.700"/><path d="M8.500 8.500v-2h5v2" fill="none" stroke="#9a9a9a" stroke-width="0.700"/></svg>
<svg class="i" style="left:116.75px;top:106.25px;" width="12.5" height="12.5" viewBox="0 0 16 16"><rect x="1.500" y="1.500" width="7" height="12" fill="#f4f4f4" stroke="#9a9a9a" stroke-width="0.800"/><path d="M3 4h4M3 6.500h4M3 9h4" stroke="#e0a020" stroke-width="1"/><path d="M11.500 1v8h-3l4.500 6 3.500-6h-3V1z" fill="#4d83c3" transform="translate(-2.500 0)"/></svg>
<svg class="i" style="left:133.75px;top:106.25px;" width="12.5" height="12.5" viewBox="0 0 16 16"><rect x="1.500" y="2.500" width="7" height="12" fill="#f4f4f4" stroke="#9a9a9a" stroke-width="0.800"/><path d="M3 5h4M3 7.500h4M3 10h4" stroke="#e0a020" stroke-width="1"/><path d="M11.500 15V7h-3L13 1l3.500 6h-3v8z" fill="#4d83c3" transform="translate(-2.500 0)"/></svg>
<svg class="i" style="left:148.75px;top:106.25px;" width="12.5" height="12.5" viewBox="0 0 16 16"><rect x="1.500" y="1.500" width="11" height="10" fill="#fff" stroke="#9a9a9a" stroke-width="1"/><circle cx="12" cy="12" r="3.300" fill="#d9433e"/><path d="M10.200 12h3.600" stroke="#fff" stroke-width="1.300"/></svg>
<svg class="i" style="left:108px;top:112.0px;" width="6" height="4" viewBox="0 0 6 4"><path d="M0 0h6l-3 3.5z" fill="#222"/></svg>
<div class="b " style="left:24px;top:121px;width:274px;height:425px;background:#fff;border:1px solid #9aa0a8;"></div>
<div class="b " style="left:42px;top:205px;width:255px;height:16px;background:#d9d9d9;"></div>
<svg class="i" style="left:30px;top:126.5px;" width="6" height="8" viewBox="0 0 6 8"><path d="M1.5 0.5l3.2 3.5-3.2 3.5" stroke="#7a7a7a" stroke-width="1.1" fill="none"/></svg>
<div class="b " style="left:44px;top:124.5px;width:12px;height:12px;background:#fff;border:1px solid #4a4a4a;"></div>
<svg class="i" style="left:44px;top:124.5px;" width="12" height="12" viewBox="0 0 12 12"><path d="M2.6 6.2l2.4 2.5 4.6-5.2" stroke="#222" stroke-width="1.1" fill="none"/></svg>
<svg class="i" style="left:59.0px;top:123.5px;" width="14" height="14" viewBox="0 0 16 16"><rect x="1.500" y="5" width="8" height="10" fill="#e8e8e8" stroke="#9c9c9c" stroke-width="0.900"/><rect x="4" y="3" width="8" height="10" fill="#f1f1f1" stroke="#9c9c9c" stroke-width="0.900"/><rect x="6.500" y="1" width="8" height="10" fill="#dfe7ef" stroke="#8f9aa6" stroke-width="0.900"/><path d="M9.500 3.500v5h2.500" stroke="#6f8aa8" stroke-width="1" fill="none"/></svg>
<span class="t " style="left:78.00px;top:123.50px;font-size:9.9px;color:#000;transform:scaleX(0.8586);">DXF</span>
<svg class="i" style="left:30px;top:143px;" width="6" height="8" viewBox="0 0 6 8"><path d="M1.5 0.5l3.2 3.5-3.2 3.5" stroke="#7a7a7a" stroke-width="1.1" fill="none"/></svg>
<div class="b " style="left:44px;top:141.0px;width:12px;height:12px;background:#fff;border:1px solid #4a4a4a;"></div>
<svg class="i" style="left:59.0px;top:140.0px;" width="14" height="14" viewBox="0 0 16 16"><circle cx="3" cy="12.500" r="1.700" fill="#7a7a7a"/><circle cx="5.500" cy="5.500" r="1.300" fill="#8a8a8a"/><circle cx="13" cy="2.500" r="1.500" fill="#7a7a7a"/></svg>
<span class="t " style="left:78.00px;top:140.00px;font-size:9.9px;color:#b4b4b4;transform:scaleX(0.9970);">pill_censiti_10</span>
<div class="b " style="left:44px;top:157.5px;width:12px;height:12px;background:#fff;border:1px solid #4a4a4a;"></div>
<svg class="i" style="left:59.0px;top:156.5px;" width="14" height="14" viewBox="0 0 16 16"><circle cx="8" cy="8" r="3.600" fill="#3a8a66" stroke="#2a5a46" stroke-width="1.200"/></svg>
<span class="t " style="left:78.00px;top:156.50px;font-size:9.9px;color:#b4b4b4;transform:scaleX(1.0469);">elementi_pi</span>
<svg class="i" style="left:44.0px;top:172.5px;" width="14" height="14" viewBox="0 0 16 16"><rect x="1" y="0.500" width="14" height="15" rx="1.200" fill="#f0f0f0" stroke="#a2a2a2" stroke-width="1"/><path d="M1 4.500h14M1 8h14M1 11.500h14M5.500 4.500v11" stroke="#b0b0b0" stroke-width="0.900"/></svg>
<span class="t " style="left:62.00px;top:172.50px;font-size:9.9px;color:#000;transform:scaleX(0.9356);font-weight:700;">dati_censimenti</span>
<svg class="i" style="left:30px;top:192px;" width="6" height="8" viewBox="0 0 6 8"><path d="M1.5 0.5l3.2 3.5-3.2 3.5" stroke="#7a7a7a" stroke-width="1.1" fill="none"/></svg>
<div class="b " style="left:44px;top:190.0px;width:12px;height:12px;background:#fff;border:1px solid #4a4a4a;"></div>
<svg class="i" style="left:59.0px;top:189.0px;" width="14" height="14" viewBox="0 0 16 16"><path d="M2 2.500l4 11L11.500 3l3-1" fill="none" stroke="#555" stroke-width="1.100"/><circle cx="14.500" cy="2" r="1.300" fill="#bbb"/></svg>
<span class="t " style="left:78.00px;top:189.00px;font-size:9.9px;color:#b4b4b4;transform:scaleX(0.9934);">Ritagliato</span>
<svg class="i" style="left:29px;top:209.5px;" width="8" height="6" viewBox="0 0 8 6"><path d="M0.5 1.2l3.5 3.3 3.5-3.3" stroke="#222" stroke-width="1.2" fill="none"/></svg>
<div class="b " style="left:44px;top:206.5px;width:12px;height:12px;background:#fff;border:1px solid #4a4a4a;"></div>
<svg class="i" style="left:44px;top:206.5px;" width="12" height="12" viewBox="0 0 12 12"><path d="M2.6 6.2l2.4 2.5 4.6-5.2" stroke="#222" stroke-width="1.1" fill="none"/></svg>
<svg class="i" style="left:59.0px;top:205.5px;" width="14" height="14" viewBox="0 0 16 16"><path d="M1 4c2.500-2 4.500-0.500 7-0.500s5-1.500 7 0.500c1.500 2.500-0.500 8-3 9s-3-1.500-5-1.500-3.500 2-5.500 0.500S-0.500 6 1 4z" fill="#a9c9ea" stroke="#6f9fd0" stroke-width="0.900"/></svg>
<span class="t " style="left:78.00px;top:205.50px;font-size:9.9px;color:#000;transform:scaleX(0.8834);font-weight:700;text-decoration:underline;">com_prov_lucca [33]</span>
<div class="b " style="left:62px;top:223.0px;width:11px;height:11px;background:#fff;border:1px solid #4a4a4a;"></div>
<svg class="i" style="left:62px;top:223.0px;" width="11" height="11" viewBox="0 0 11 11"><path d="M2.6 6.2l2.4 2.5 4.6-5.2" stroke="#222" stroke-width="1.1" fill="none"/></svg>
<div class="b " style="left:77px;top:222px;width:13px;height:13px;background:#33ff33;border:1px solid #9a9a9a;"></div>
<span class="t " style="left:94.00px;top:221.50px;font-size:9.9px;color:#000;transform:scaleX(0.9721);">censiti [10]</span>
<div class="b " style="left:62px;top:238.5px;width:11px;height:11px;background:#fff;border:1px solid #4a4a4a;"></div>
<svg class="i" style="left:62px;top:238.5px;" width="11" height="11" viewBox="0 0 11 11"><path d="M2.6 6.2l2.4 2.5 4.6-5.2" stroke="#222" stroke-width="1.1" fill="none"/></svg>
<div class="b " style="left:77px;top:237.5px;width:13px;height:13px;background:#f0e1cd;border:1px solid #9a9a9a;"></div>
<span class="t " style="left:94.00px;top:237.00px;font-size:9.9px;color:#000;transform:scaleX(0.9761);">non censiti [23]</span>
<div class="b " style="left:25px;top:550px;width:272px;height:17px;background:linear-gradient(#dcdcdc,#d2d2d2);border-top:1px solid #e8e8e8;"></div>
<span class="t " style="left:28.00px;top:551.50px;font-size:9.9px;color:#000;transform:scaleX(0.9631);">Browser Panel</span>
<svg class="i" style="left:273px;top:555px;" width="22" height="8" viewBox="0 0 22 8"><path d="M1.5 2.5h4v4h-4z M2.5 2.5v-1.5h4v4h-1" stroke="#111" stroke-width="1" fill="none"/><path d="M14.5 1l5 5.5m0-5.5l-5 5.5" stroke="#111" stroke-width="1.4" fill="none"/></svg>
<svg class="i" style="left:26.75px;top:570.25px;" width="12.5" height="12.5" viewBox="0 0 16 16"><rect x="1.500" y="1.500" width="11" height="10.500" fill="#fff" stroke="#9a9a9a" stroke-width="1"/><circle cx="12" cy="12" r="3.300" fill="#4aa657"/><path d="M12 10.200v3.600M10.200 12h3.600" stroke="#fff" stroke-width="1.200"/></svg>
<svg class="i" style="left:42.25px;top:570.25px;" width="12.5" height="12.5" viewBox="0 0 16 16"><path d="M2.2 7.2a6 6 0 0 1 10.4-3.4" fill="none" stroke="#4d83c3" stroke-width="2.6"/><path d="M15.6 1.4v6h-6z" fill="#4d83c3"/><path d="M13.8 8.8a6 6 0 0 1-10.4 3.4" fill="none" stroke="#4d83c3" stroke-width="2.6"/><path d="M0.4 14.6v-6h6z" fill="#4d83c3"/></svg>
<svg class="i" style="left:58.75px;top:570.25px;" width="12.5" height="12.5" viewBox="0 0 16 16"><path d="M1 3h14l-5.500 6v6l-3-1.500V9z" fill="#4d83c3"/><rect x="1" y="1.200" width="14" height="2.200" fill="#f0c92c"/></svg>
<svg class="i" style="left:74.75px;top:570.25px;" width="12.5" height="12.5" viewBox="0 0 16 16"><rect x="1.500" y="2.500" width="7" height="12" fill="#f4f4f4" stroke="#9a9a9a" stroke-width="0.800"/><path d="M3 5h4M3 7.500h4M3 10h4" stroke="#e0a020" stroke-width="1"/><path d="M11.500 15V7h-3L13 1l3.500 6h-3v8z" fill="#4d83c3" transform="translate(-2.500 0)"/></svg>
<svg class="i" style="left:90.75px;top:570.25px;" width="12.5" height="12.5" viewBox="0 0 16 16"><circle cx="8" cy="8" r="7" fill="#4d83c3"/><path d="M7 7h1.800v5M8 3.600v1.600" stroke="#fff" stroke-width="1.700" fill="none"/></svg>
<div class="b " style="left:24px;top:586px;width:274px;height:141px;background:#fff;border:1px solid #9aa0a8;"></div>
<svg class="i" style="left:29px;top:592px;" width="8" height="6" viewBox="0 0 8 6"><path d="M0.5 1.2l3.5 3.3 3.5-3.3" stroke="#222" stroke-width="1.2" fill="none"/></svg>
<svg class="i" style="left:44.0px;top:588.0px;" width="14" height="14" viewBox="0 0 16 16"><path d="M8 0.800l2.100 4.900 5.300 0.500-4 3.500 1.200 5.200L8 12.200l-4.600 2.700 1.200-5.200-4-3.500 5.300-0.500z" fill="#f2f5ee" stroke="#9fae8a" stroke-width="1"/></svg>
<span class="t " style="left:62.00px;top:588.00px;font-size:9.9px;color:#000;transform:scaleX(0.9826);">Favorites</span>
<div class="b" style="left:26px;top:587px;width:256px;height:126px;overflow:hidden;">
<svg class="i" style="left:21px;top:21.0px;" width="6" height="8" viewBox="0 0 6 8"><path d="M1.5 0.5l3.2 3.5-3.2 3.5" stroke="#7a7a7a" stroke-width="1.1" fill="none"/></svg>
<svg class="i" style="left:35.0px;top:18.0px;" width="14" height="14" viewBox="0 0 16 16"><path d="M3.500 1h9.500v14H3.500z" fill="#f6dc6a"/><path d="M3.500 1h3.500v14H3.500z" fill="#efd050"/></svg>
<span class="t " style="left:54.00px;top:18.00px;font-size:9.9px;color:#000;transform:scaleX(0.9260);">C:\EsercitazioniQGIS2009</span>
<svg class="i" style="left:21px;top:37.700000000000045px;" width="6" height="8" viewBox="0 0 6 8"><path d="M1.5 0.5l3.2 3.5-3.2 3.5" stroke="#7a7a7a" stroke-width="1.1" fill="none"/></svg>
<svg class="i" style="left:35.0px;top:34.7px;" width="14" height="14" viewBox="0 0 16 16"><path d="M3.500 1h9.500v14H3.500z" fill="#f6dc6a"/><path d="M3.500 1h3.500v14H3.500z" fill="#efd050"/></svg>
<span class="t " style="left:54.00px;top:34.70px;font-size:9.9px;color:#000;transform:scaleX(0.9662);">C:\Users\Salvatore\condiv_rosa\QGIS_data</span>
<svg class="i" style="left:21px;top:54.39999999999998px;" width="6" height="8" viewBox="0 0 6 8"><path d="M1.5 0.5l3.2 3.5-3.2 3.5" stroke="#7a7a7a" stroke-width="1.1" fill="none"/></svg>
<svg class="i" style="left:35.0px;top:51.4px;" width="14" height="14" viewBox="0 0 16 16"><path d="M3.500 1h9.500v14H3.500z" fill="#f6dc6a"/><path d="M3.500 1h3.500v14H3.500z" fill="#efd050"/></svg>
<span class="t " style="left:54.00px;top:51.40px;font-size:9.9px;color:#000;transform:scaleX(0.9825);">C:\Users\Salvatore\Desktop</span>
<svg class="i" style="left:21px;top:71.10000000000002px;" width="6" height="8" viewBox="0 0 6 8"><path d="M1.5 0.5l3.2 3.5-3.2 3.5" stroke="#7a7a7a" stroke-width="1.1" fill="none"/></svg>
<svg class="i" style="left:35.0px;top:68.1px;" width="14" height="14" viewBox="0 0 16 16"><path d="M3.500 1h9.500v14H3.500z" fill="#f6dc6a"/><path d="M3.500 1h3.500v14H3.500z" fill="#efd050"/></svg>
<span class="t " style="left:54.00px;top:68.10px;font-size:9.9px;color:#000;transform:scaleX(0.9624);">C:\Users\Salvatore\Desktop\a_dati_ODS_16</span>
<svg class="i" style="left:21px;top:87.79999999999995px;" width="6" height="8" viewBox="0 0 6 8"><path d="M1.5 0.5l3.2 3.5-3.2 3.5" stroke="#7a7a7a" stroke-width="1.1" fill="none"/></svg>
<svg class="i" style="left:35.0px;top:84.8px;" width="14" height="14" viewBox="0 0 16 16"><path d="M3.500 1h9.500v14H3.500z" fill="#f6dc6a"/><path d="M3.500 1h3.500v14H3.500z" fill="#efd050"/></svg>
<span class="t " style="left:54.00px;top:84.80px;font-size:9.9px;color:#000;transform:scaleX(0.9867);">C:\Users\Salvatore\Documents\grassdata\newlocation</span>
<svg class="i" style="left:21px;top:104.5px;" width="6" height="8" viewBox="0 0 6 8"><path d="M1.5 0.5l3.2 3.5-3.2 3.5" stroke="#7a7a7a" stroke-width="1.1" fill="none"/></svg>
<svg class="i" style="left:35.0px;top:101.5px;" width="14" height="14" viewBox="0 0 16 16"><path d="M3.500 1h9.500v14H3.500z" fill="#f6dc6a"/><path d="M3.500 1h3.500v14H3.500z" fill="#efd050"/></svg>
<span class="t " style="left:54.00px;top:101.50px;font-size:9.9px;color:#000;transform:scaleX(0.9839);">C:\Users\Salvatore\Documents\progetti_qgis_vari</span>
<svg class="i" style="left:21px;top:121.20000000000005px;" width="6" height="8" viewBox="0 0 6 8"><path d="M1.5 0.5l3.2 3.5-3.2 3.5" stroke="#7a7a7a" stroke-width="1.1" fill="none"/></svg>
<svg class="i" style="left:35.0px;top:118.2px;" width="14" height="14" viewBox="0 0 16 16"><path d="M3.500 1h9.500v14H3.500z" fill="#f6dc6a"/><path d="M3.500 1h3.500v14H3.500z" fill="#efd050"/></svg>
<span class="t " style="left:54.00px;top:118.20px;font-size:9.9px;color:#000;transform:scaleX(0.9942);">C:\Users\Salvatore\Documents\Referendem</span>
</div>
<div class="b " style="left:282px;top:587px;width:15px;height:126px;background:#f0f0f0;"></div>
<div class="b " style="left:283px;top:601px;width:13px;height:15px;background:#cdcdcd;"></div>
<svg class="i" style="left:285px;top:591px;" width="9" height="6" viewBox="0 0 9 6"><path d="M0.8 5l3.7-3.8 3.7 3.8" stroke="#333" stroke-width="1.3" fill="none"/></svg>
<svg class="i" style="left:285px;top:703px;" width="9" height="6" viewBox="0 0 9 6"><path d="M0.8 1l3.7 3.8 3.7-3.8" stroke="#333" stroke-width="1.3" fill="none"/></svg>
<div class="b " style="left:26px;top:713px;width:271px;height:13px;background:#f0f0f0;"></div>
<div class="b " style="left:40px;top:714px;width:167px;height:12px;background:#cdcdcd;"></div>
<svg class="i" style="left:29px;top:715px;" width="6" height="9" viewBox="0 0 6 9"><path d="M5 0.8l-3.8 3.7 3.8 3.7" stroke="#333" stroke-width="1.3" fill="none"/></svg>
<svg class="i" style="left:271px;top:715px;" width="6" height="9" viewBox="0 0 6 9"><path d="M1 0.8l3.8 3.7-3.8 3.7" stroke="#333" stroke-width="1.3" fill="none"/></svg>
<div class="b " style="left:300px;top:84px;width:649px;height:645px;background:#fff;border:1px solid #b9b9b9;"></div>
<svg class="i" style="left:0;top:0" width="1333" height="750" viewBox="0 0 1333 750"><polygon points="449.2,164.7 450.3,160.5 452.5,154.7 455.0,148.8 458.3,141.3 460.8,138.5 465.8,136.3 466.7,132.2 465.3,126.3 465.8,121.3 470.8,119.7 475.0,117.2 479.2,113.8 485.0,110.5 491.7,106.7 498.3,103.3 505.0,102.5 511.7,103.0 513.8,106.0 516.7,109.3 521.7,112.2 528.3,113.8 535.0,115.8 541.7,118.0 546.7,118.8 550.0,115.8 555.0,116.0 560.0,117.7 565.0,118.8 568.3,123.8 572.5,128.0 578.3,131.3 580.0,132.4 583.2,135.6 586.4,137.6 588.8,140.0 592.0,140.8 593.2,143.2 594.8,146.0 596.0,148.8 597.0,151.6 597.6,154.4 598.2,156.8 600.8,158.0 603.2,160.0 606.4,162.0 609.6,164.0 612.8,166.0 615.6,167.2 618.8,166.8 620.8,165.2 623.2,163.2 626.4,162.6 629.6,162.8 632.8,163.4 634.8,164.0 637.2,162.0 640.0,160.8 641.4,163.4 644.4,167.4 651.9,169.2 658.2,170.9 661.4,174.2 663.9,177.9 661.4,182.9 659.4,187.9 658.2,192.9 660.7,197.9 663.2,200.9 669.4,205.9 675.6,211.7 681.9,216.7 686.9,221.7 690.6,226.7 689.4,230.4 688.1,234.9 689.4,239.1 691.4,245.4 696.9,249.1 704.4,253.4 711.9,257.9 719.4,262.9 730.3,270.0 733.4,272.5 735.9,275.0 737.8,277.5 739.0,281.3 740.0,285.1 740.3,286.3 742.8,288.8 745.9,291.1 749.1,292.6 752.8,293.2 756.6,292.9 759.1,291.3 761.0,288.8 764.1,286.9 767.9,285.7 772.3,285.3 776.0,285.7 777.9,287.6 778.5,289.4 782.0,293.0 787.0,297.0 791.0,300.6 796.0,299.6 802.0,297.6 808.0,297.6 813.0,300.0 819.0,301.0 824.0,305.0 828.0,310.0 831.6,314.4 837.0,315.6 842.0,316.0 846.0,319.0 849.6,323.0 854.0,325.6 856.6,329.0 857.4,336.0 858.0,343.0 859.0,350.0 857.0,356.0 855.0,362.0 854.0,368.0 855.6,373.0 860.0,376.0 865.0,377.4 868.4,378.0 867.6,383.0 868.4,388.0 870.0,393.0 867.0,397.0 864.0,400.0 859.0,402.0 854.0,401.0 850.0,401.0 846.0,404.0 841.0,408.0 837.6,412.0 836.0,417.0 835.6,422.0 833.0,426.0 829.0,429.6 826.8,433.7 823.0,438.7 818.0,441.2 816.8,447.5 818.0,453.7 817.5,460.0 818.8,467.5 819.3,473.7 816.8,481.2 814.3,488.7 813.0,494.9 811.3,503.7 809.3,509.9 806.8,516.2 803.0,521.2 798.8,524.9 800.6,531.2 803.0,537.4 805.5,543.7 806.8,549.9 803.0,554.9 801.8,561.1 801.8,568.6 803.0,575.0 808.0,576.2 813.0,575.5 819.3,575.7 818.8,570.0 821.8,566.2 825.5,567.5 828.0,573.7 831.8,576.2 832.5,582.5 833.8,590.0 839.3,591.2 844.3,597.5 848.0,603.0 855.5,608.7 860.5,615.0 863.0,622.4 866.3,629.9 867.5,637.4 864.3,644.9 860.5,652.4 857.3,658.7 854.3,666.9 850.5,662.4 845.5,656.2 840.5,651.2 835.5,646.9 833.0,651.2 829.3,648.7 821.8,647.4 813.0,646.2 806.8,649.9 801.8,654.9 798.8,658.7 796.8,664.9 794.3,672.4 791.8,679.9 788.1,687.4 784.3,694.9 780.6,702.4 774.3,704.9 768.1,704.4 761.8,701.1 758.1,696.1 754.3,699.9 749.3,703.6 743.1,706.1 736.9,707.4 730.6,709.9 725.6,711.9 719.4,708.6 713.1,704.9 705.6,701.9 699.4,699.4 693.1,702.9 686.9,704.9 680.6,707.9 676.9,704.9 675.6,702.9 669.4,702.4 663.2,701.1 656.9,696.9 651.9,694.9 645.7,694.4 639.4,695.6 635.7,689.9 630.7,684.9 628.2,677.4 628.2,668.7 631.9,664.9 636.9,662.4 638.2,654.9 636.9,648.7 631.9,646.2 628.2,647.4 623.2,641.2 619.4,632.4 616.9,624.9 616.4,618.7 612.0,619.4 608.2,623.7 607.0,627.4 600.7,626.2 598.2,629.9 592.0,633.7 584.5,637.4 579.5,641.2 574.5,641.9 572.4,640.7 562.4,639.9 553.6,638.7 548.6,634.9 543.6,631.7 538.6,632.9 532.4,634.4 527.9,632.4 524.9,628.7 521.1,626.2 517.4,624.9 511.1,628.7 504.9,631.9 494.9,635.4 484.9,638.2 476.2,640.4 473.7,631.2 471.2,622.4 467.4,612.5 463.7,602.5 461.4,595.0 461.7,590.0 461.4,585.0 459.9,577.5 456.2,567.5 451.2,557.5 446.2,550.0 442.4,545.0 436.2,532.4 428.7,519.9 422.5,509.9 416.2,501.2 411.2,494.9 407.0,490.9 402.6,485.3 397.6,479.6 392.6,474.0 387.5,468.3 382.5,462.7 378.8,458.7 383.8,455.8 388.2,453.3 390.1,452.7 393.8,452.0 397.9,450.8 398.8,449.5 400.7,447.0 403.2,444.5 402.6,442.0 401.3,438.2 400.7,434.5 402.6,432.0 405.7,429.5 408.9,427.0 410.7,423.8 412.0,420.1 412.6,416.3 415.1,414.4 417.0,412.5 420.1,410.7 423.9,408.8 426.4,406.3 428.9,403.8 430.2,400.0 428.7,393.6 427.5,387.4 433.7,382.4 437.4,377.4 441.2,371.2 444.9,367.4 443.7,362.4 447.4,356.2 452.4,351.2 456.2,347.4 457.4,342.4 458.7,334.9 457.4,327.4 454.9,319.9 452.4,312.5 449.9,305.0 447.4,301.2 445.0,301.3 439.2,299.7 436.7,296.3 433.3,293.0 425.0,293.0 418.3,292.2 413.3,288.8 412.5,283.0 411.7,276.3 409.2,270.5 412.5,266.3 413.3,258.8 415.0,253.0 420.0,249.7 419.2,244.7 417.5,239.7 418.3,235.5 422.5,232.2 420.0,227.2 417.5,223.0 413.7,217.9 415.0,211.7 411.2,202.9 415.0,200.4 411.2,194.2 420.0,184.2 428.7,181.7 437.4,177.9 442.4,169.2 449.2,164.2" fill="#eee1cd" stroke="none"/>
<polygon points="449.2,164.7 450.3,160.5 452.5,154.7 455.0,148.8 458.3,141.3 460.8,138.5 465.8,136.3 466.7,132.2 465.3,126.3 465.8,121.3 470.8,119.7 475.0,117.2 479.2,113.8 485.0,110.5 491.7,106.7 498.3,103.3 505.0,102.5 511.7,103.0 513.8,106.0 516.7,109.3 521.7,112.2 528.3,113.8 535.0,115.8 541.7,118.0 546.7,118.8 550.0,115.8 555.0,116.0 560.0,117.7 565.0,118.8 568.3,123.8 572.5,128.0 578.3,131.3 580.0,132.4 583.2,135.6 586.4,137.6 588.8,140.0 592.0,140.8 593.2,143.2 594.8,146.0 596.0,148.8 597.0,151.6 597.6,154.4 598.2,156.8 596.0,157.6 594.4,158.8 592.0,160.4 590.4,161.4 588.0,163.2 585.6,165.2 583.6,166.4 582.4,168.0 582.0,169.2 579.2,168.4 576.0,167.6 573.6,167.0 570.8,166.6 569.2,167.6 568.0,169.6 566.4,171.2 564.0,172.8 561.6,174.4 559.6,176.4 557.6,178.0 554.4,179.0 551.2,179.6 548.0,180.4 544.8,181.2 542.4,181.2 540.0,180.8 537.4,179.9 532.4,184.2 527.4,189.2 522.4,192.9 537.0,181.4 534.3,183.6 531.5,185.9 528.8,188.2 526.1,190.0 523.4,191.8 521.6,194.5 518.9,196.3 516.1,197.7 513.9,199.5 512.5,202.7 511.6,206.3 511.1,209.0 512.5,211.7 514.3,214.0 516.6,215.8 519.3,217.2 522.0,217.6 524.3,219.0 526.1,220.8 527.9,223.1 528.4,224.9 527.0,227.1 526.1,229.4 525.2,231.7 527.5,232.6 529.7,232.1 531.5,233.5 533.6,235.0 537.2,238.6 540.9,242.2 544.5,244.9 548.1,247.2 551.8,249.5 554.5,251.8 556.3,254.9 556.8,258.5 559.0,261.3 561.3,264.0 564.9,267.6 567.2,269.4 569.9,272.1 572.2,274.9 572.6,276.7 569.9,279.4 567.2,282.1 564.5,283.9 560.8,287.6 557.2,291.2 558.3,288.8 550.0,295.5 543.3,300.5 540.8,289.7 539.2,281.3 535.8,274.7 531.7,271.3 525.0,273.0 518.3,275.5 515.8,271.3 514.2,266.3 510.8,262.2 506.7,258.8 502.5,255.5 500.0,258.0 495.0,260.5 488.3,261.3 485.0,254.7 482.5,246.3 482.6,247.5 481.7,245.3 480.8,241.7 479.4,238.0 478.5,234.4 477.6,231.7 477.1,228.5 476.2,225.8 474.9,223.5 473.5,221.2 472.2,219.4 469.9,220.1 466.3,221.2 462.6,222.2 459.0,222.8 457.2,222.2 458.1,219.9 459.0,217.2 458.1,213.5 457.2,209.9 456.3,206.3 456.8,203.6 456.3,200.8 454.0,199.0 452.2,196.8 450.9,192.7 449.5,189.1 448.1,185.4 446.8,182.7 447.5,183.8 448.3,179.7 452.5,175.5 450.8,171.3 449.2,164.7" fill="#33ff33" stroke="none"/>
<polygon points="598.2,156.8 600.8,158.0 603.2,160.0 606.4,162.0 609.6,164.0 612.8,166.0 615.6,167.2 618.8,166.8 620.8,165.2 623.2,163.2 626.4,162.6 629.6,162.8 632.8,163.4 634.8,164.0 637.2,162.0 640.0,160.8 641.4,163.4 644.4,167.4 651.9,169.2 658.2,170.9 661.4,174.2 663.9,177.9 661.4,182.9 659.4,187.9 658.2,192.9 660.7,197.9 663.2,200.9 669.4,205.9 675.6,211.7 681.9,216.7 686.9,221.7 690.6,226.7 684.4,227.4 678.1,224.9 671.9,223.7 665.7,224.2 659.4,226.7 653.2,229.2 648.2,234.2 643.2,239.1 641.1,237.2 638.8,235.4 637.4,234.1 629.7,236.8 622.5,240.4 622.9,245.8 623.4,249.5 622.5,253.1 621.1,256.7 618.9,259.4 616.1,261.3 613.4,262.6 610.7,264.0 609.8,265.8 607.1,267.2 605.2,268.5 603.4,271.2 602.1,272.1 602.5,270.3 602.1,268.1 599.8,269.0 596.2,270.3 593.5,272.1 590.7,274.9 588.9,277.1 589.4,279.4 587.1,281.7 586.7,278.5 586.2,274.9 585.3,271.2 584.4,267.6 583.5,264.0 582.1,260.8 579.4,259.9 576.2,258.5 573.5,255.4 572.2,255.8 570.8,256.3 570.3,251.3 569.0,247.7 567.2,244.5 566.3,241.3 564.0,238.2 561.7,235.0 559.9,231.8 557.2,228.6 555.4,225.0 554.5,217.9 553.2,209.2 557.0,202.9 558.2,195.4 558.8,190.0 559.6,186.8 560.4,184.4 562.4,182.4 564.8,181.6 568.0,181.4 571.2,181.6 573.6,180.8 575.6,179.2 576.4,177.2 577.2,174.8 578.4,172.8 580.0,170.8 582.0,169.4 583.2,169.4 585.6,169.2 588.0,168.4 590.0,166.4 591.2,164.8 590.8,162.8 591.6,161.2 593.6,159.6 596.0,158.0 598.2,156.8" fill="#33ff33" stroke="none"/>
<polygon points="690.6,226.7 689.4,230.4 688.1,234.9 689.4,239.1 691.4,245.4 696.9,249.1 704.4,253.4 711.9,257.9 719.4,262.9 730.3,270.0 733.4,272.5 735.9,275.0 737.8,277.5 739.0,281.3 740.0,285.1 740.3,286.3 736.5,286.3 732.8,286.6 730.3,288.2 727.8,290.1 725.3,291.9 722.8,293.8 721.5,296.3 720.2,299.5 717.1,300.7 715.2,302.9 711.5,302.9 708.7,303.6 707.1,306.4 706.2,310.1 705.2,313.9 703.9,317.6 702.7,321.4 701.7,325.2 701.4,328.9 699.9,332.7 698.7,336.4 697.7,340.2 695.2,343.4 692.0,346.5 688.9,349.6 685.8,352.1 683.2,355.3 681.4,359.0 679.5,363.4 685.8,350.0 683.2,353.8 681.4,358.1 679.5,362.5 677.0,366.9 674.5,370.7 673.2,374.4 672.0,378.2 669.5,380.7 667.0,382.9 665.1,385.4 667.0,390.1 665.1,393.9 663.2,397.6 661.9,401.4 660.1,405.2 657.5,407.1 653.8,407.4 650.7,408.3 648.8,410.2 650.7,412.7 648.8,415.2 646.3,418.3 645.0,421.5 646.9,424.6 646.3,427.7 644.1,429.6 640.4,429.0 636.6,429.6 633.5,428.3 630.4,426.4 627.8,427.7 624.1,430.2 620.9,432.7 618.4,435.2 615.3,435.9 612.8,435.2 610.3,436.5 607.1,436.5 605.3,434.0 602.8,431.5 599.6,429.0 596.5,427.1 592.7,426.4 589.0,426.4 585.2,427.1 581.5,429.0 577.7,430.8 573.9,432.7 570.8,433.4 569.5,430.2 568.3,426.4 566.4,421.4 563.9,417.7 561.4,413.9 558.9,410.1 556.4,406.4 553.9,403.2 552.0,400.1 550.1,402.6 547.0,403.2 543.8,401.4 541.3,398.9 538.2,396.4 535.1,393.9 531.3,390.1 528.2,388.2 526.9,386.3 524.4,382.6 521.9,378.8 520.0,373.8 519.4,369.4 521.9,367.1 525.0,364.6 527.5,361.4 528.8,357.7 530.0,353.9 530.7,350.1 533.8,348.3 536.3,346.4 539.5,344.5 542.0,343.2 543.2,340.8 546.3,339.5 551.4,337.6 556.4,335.7 560.8,334.1 561.4,331.3 564.5,330.1 567.7,327.6 570.8,325.7 573.9,325.7 576.4,327.6 577.7,325.1 579.6,323.2 580.2,320.1 580.5,316.3 582.7,315.3 586.5,315.7 589.0,317.6 590.2,320.7 592.7,323.2 594.6,320.7 597.8,320.1 601.5,320.7 605.3,320.1 608.4,319.4 610.3,316.3 611.5,312.5 614.0,311.9 615.3,309.4 617.8,307.5 621.6,306.3 625.3,305.6 628.5,305.0 630.4,303.8 631.0,301.2 627.3,295.0 624.8,290.0 627.9,287.6 627.5,284.8 629.7,280.3 634.3,278.5 636.1,275.8 642.9,267.6 644.2,265.8 647.9,264.4 661.9,257.9 666.9,250.4 671.9,244.1 679.4,239.1 685.6,234.2 690.6,226.7" fill="#33ff33" stroke="none"/>
<g fill="none" stroke="#202020" stroke-width="1" stroke-linejoin="round">
<polyline points="449.2,164.7 450.3,160.5 452.5,154.7 455.0,148.8 458.3,141.3 460.8,138.5 465.8,136.3 466.7,132.2 465.3,126.3 465.8,121.3 470.8,119.7 475.0,117.2 479.2,113.8 485.0,110.5 491.7,106.7 498.3,103.3 505.0,102.5 511.7,103.0 513.8,106.0 516.7,109.3 521.7,112.2 528.3,113.8 535.0,115.8 541.7,118.0 546.7,118.8 550.0,115.8 555.0,116.0 560.0,117.7 565.0,118.8 568.3,123.8 572.5,128.0 578.3,131.3 580.0,132.4 583.2,135.6 586.4,137.6 588.8,140.0 592.0,140.8 593.2,143.2 594.8,146.0 596.0,148.8 597.0,151.6 597.6,154.4 598.2,156.8"/>
<polyline points="598.2,156.8 600.8,158.0 603.2,160.0 606.4,162.0 609.6,164.0 612.8,166.0 615.6,167.2 618.8,166.8 620.8,165.2 623.2,163.2 626.4,162.6 629.6,162.8 632.8,163.4 634.8,164.0 637.2,162.0 640.0,160.8 641.4,163.4 644.4,167.4 651.9,169.2 658.2,170.9 661.4,174.2 663.9,177.9 661.4,182.9 659.4,187.9 658.2,192.9 660.7,197.9 663.2,200.9 669.4,205.9 675.6,211.7 681.9,216.7 686.9,221.7 690.6,226.7"/>
<polyline points="690.6,226.7 689.4,230.4 688.1,234.9 689.4,239.1 691.4,245.4 696.9,249.1 704.4,253.4 711.9,257.9 719.4,262.9 730.3,270.0 733.4,272.5 735.9,275.0 737.8,277.5 739.0,281.3 740.0,285.1 740.3,286.3"/>
<polyline points="778.5,289.4 782.0,293.0 787.0,297.0 791.0,300.6 796.0,299.6 802.0,297.6 808.0,297.6 813.0,300.0 819.0,301.0 824.0,305.0 828.0,310.0 831.6,314.4 837.0,315.6 842.0,316.0 846.0,319.0 849.6,323.0 854.0,325.6 856.6,329.0 857.4,336.0 858.0,343.0 859.0,350.0 857.0,356.0 855.0,362.0 854.0,368.0 855.6,373.0 860.0,376.0 865.0,377.4 868.4,378.0 867.6,383.0 868.4,388.0 870.0,393.0 867.0,397.0 864.0,400.0 859.0,402.0 854.0,401.0 850.0,401.0 846.0,404.0 841.0,408.0 837.6,412.0 836.0,417.0 835.6,422.0 833.0,426.0 829.0,429.6 826.8,433.7 823.0,438.7 818.0,441.2 816.8,447.5 818.0,453.7 817.5,460.0 818.8,467.5 819.3,473.7 816.8,481.2 814.3,488.7 813.0,494.9 811.3,503.7 809.3,509.9 806.8,516.2 803.0,521.2 798.8,524.9 800.6,531.2 803.0,537.4 805.5,543.7 806.8,549.9 803.0,554.9 801.8,561.1 801.8,568.6 803.0,575.0 808.0,576.2 813.0,575.5 819.3,575.7 818.8,570.0 821.8,566.2 825.5,567.5 828.0,573.7 831.8,576.2 832.5,582.5 833.8,590.0 839.3,591.2 844.3,597.5 848.0,603.0 855.5,608.7 860.5,615.0 863.0,622.4 866.3,629.9 867.5,637.4 864.3,644.9 860.5,652.4 857.3,658.7 854.3,666.9 850.5,662.4 845.5,656.2 840.5,651.2 835.5,646.9 833.0,651.2 829.3,648.7 821.8,647.4 813.0,646.2 806.8,649.9 801.8,654.9 798.8,658.7 796.8,664.9 794.3,672.4 791.8,679.9 788.1,687.4 784.3,694.9 780.6,702.4 774.3,704.9 768.1,704.4 761.8,701.1 758.1,696.1 754.3,699.9 749.3,703.6 743.1,706.1 736.9,707.4 730.6,709.9 725.6,711.9 719.4,708.6 713.1,704.9 705.6,701.9 699.4,699.4 693.1,702.9 686.9,704.9 680.6,707.9 676.9,704.9 675.6,702.9 669.4,702.4 663.2,701.1 656.9,696.9 651.9,694.9 645.7,694.4 639.4,695.6 635.7,689.9 630.7,684.9 628.2,677.4 628.2,668.7 631.9,664.9 636.9,662.4 638.2,654.9 636.9,648.7 631.9,646.2 628.2,647.4 623.2,641.2 619.4,632.4 616.9,624.9 616.4,618.7 612.0,619.4 608.2,623.7 607.0,627.4 600.7,626.2 598.2,629.9 592.0,633.7 584.5,637.4 579.5,641.2 574.5,641.9 572.4,640.7 562.4,639.9 553.6,638.7 548.6,634.9 543.6,631.7 538.6,632.9 532.4,634.4 527.9,632.4 524.9,628.7 521.1,626.2 517.4,624.9 511.1,628.7 504.9,631.9 494.9,635.4 484.9,638.2 476.2,640.4 473.7,631.2 471.2,622.4 467.4,612.5 463.7,602.5 461.4,595.0 461.7,590.0 461.4,585.0 459.9,577.5 456.2,567.5 451.2,557.5 446.2,550.0 442.4,545.0 436.2,532.4 428.7,519.9 422.5,509.9 416.2,501.2 411.2,494.9 407.0,490.9 402.6,485.3 397.6,479.6 392.6,474.0 387.5,468.3 382.5,462.7 378.8,458.7 383.8,455.8 388.2,453.3 390.1,452.7 393.8,452.0 397.9,450.8 398.8,449.5 400.7,447.0 403.2,444.5 402.6,442.0 401.3,438.2 400.7,434.5 402.6,432.0 405.7,429.5 408.9,427.0 410.7,423.8 412.0,420.1 412.6,416.3 415.1,414.4 417.0,412.5 420.1,410.7 423.9,408.8 426.4,406.3 428.9,403.8 430.2,400.0 428.7,393.6 427.5,387.4 433.7,382.4 437.4,377.4 441.2,371.2 444.9,367.4 443.7,362.4 447.4,356.2 452.4,351.2 456.2,347.4 457.4,342.4 458.7,334.9 457.4,327.4 454.9,319.9 452.4,312.5 449.9,305.0 447.4,301.2 445.0,301.3 439.2,299.7 436.7,296.3 433.3,293.0 425.0,293.0 418.3,292.2 413.3,288.8 412.5,283.0 411.7,276.3 409.2,270.5 412.5,266.3 413.3,258.8 415.0,253.0 420.0,249.7 419.2,244.7 417.5,239.7 418.3,235.5 422.5,232.2 420.0,227.2 417.5,223.0 413.7,217.9 415.0,211.7 411.2,202.9 415.0,200.4 411.2,194.2 420.0,184.2 428.7,181.7 437.4,177.9 442.4,169.2 449.2,164.2"/>
<polyline points="598.2,156.8 596.0,157.6 594.4,158.8 592.0,160.4 590.4,161.4 588.0,163.2 585.6,165.2 583.6,166.4 582.4,168.0 582.0,169.2 579.2,168.4 576.0,167.6 573.6,167.0 570.8,166.6 569.2,167.6 568.0,169.6 566.4,171.2 564.0,172.8 561.6,174.4 559.6,176.4 557.6,178.0 554.4,179.0 551.2,179.6 548.0,180.4 544.8,181.2 542.4,181.2 540.0,180.8 537.4,179.9"/>
<polyline points="537.4,179.9 532.4,184.2 527.4,189.2 522.4,192.9 537.0,181.4 534.3,183.6 531.5,185.9 528.8,188.2 526.1,190.0 523.4,191.8 521.6,194.5 518.9,196.3 516.1,197.7 513.9,199.5 512.5,202.7 511.6,206.3 511.1,209.0 512.5,211.7 514.3,214.0 516.6,215.8 519.3,217.2 522.0,217.6 524.3,219.0 526.1,220.8 527.9,223.1 528.4,224.9 527.0,227.1 526.1,229.4 525.2,231.7"/>
<polyline points="525.2,231.7 527.5,232.6 529.7,232.1 531.5,233.5 533.6,235.0 537.2,238.6 540.9,242.2 544.5,244.9 548.1,247.2 551.8,249.5 554.5,251.8 556.3,254.9 556.8,258.5 559.0,261.3 561.3,264.0 564.9,267.6 567.2,269.4 569.9,272.1 572.2,274.9 572.6,276.7"/>
<polyline points="572.6,276.7 569.9,279.4 567.2,282.1 564.5,283.9 560.8,287.6 557.2,291.2 558.3,288.8 550.0,295.5 543.3,300.5"/>
<polyline points="543.3,300.5 540.8,289.7 539.2,281.3 535.8,274.7 531.7,271.3 525.0,273.0 518.3,275.5 515.8,271.3 514.2,266.3 510.8,262.2 506.7,258.8 502.5,255.5 500.0,258.0 495.0,260.5 488.3,261.3"/>
<polyline points="488.3,261.3 485.0,254.7 482.5,246.3 482.6,247.5 481.7,245.3 480.8,241.7 479.4,238.0 478.5,234.4 477.6,231.7 477.1,228.5 476.2,225.8 474.9,223.5 473.5,221.2 472.2,219.4 469.9,220.1 466.3,221.2 462.6,222.2 459.0,222.8 457.2,222.2 458.1,219.9 459.0,217.2 458.1,213.5 457.2,209.9 456.3,206.3 456.8,203.6 456.3,200.8 454.0,199.0 452.2,196.8 450.9,192.7 449.5,189.1 448.1,185.4 446.8,182.7 447.5,183.8 448.3,179.7 452.5,175.5 450.8,171.3 449.2,164.7"/>
<polyline points="690.6,226.7 684.4,227.4 678.1,224.9 671.9,223.7 665.7,224.2 659.4,226.7 653.2,229.2 648.2,234.2 643.2,239.1 641.1,237.2 638.8,235.4 637.4,234.1 629.7,236.8 622.5,240.4 622.9,245.8 623.4,249.5 622.5,253.1 621.1,256.7 618.9,259.4 616.1,261.3 613.4,262.6 610.7,264.0 609.8,265.8 607.1,267.2 605.2,268.5 603.4,271.2 602.1,272.1 602.5,270.3 602.1,268.1 599.8,269.0 596.2,270.3 593.5,272.1 590.7,274.9 588.9,277.1 589.4,279.4 587.1,281.7"/>
<polyline points="587.1,281.7 586.7,278.5 586.2,274.9 585.3,271.2 584.4,267.6 583.5,264.0 582.1,260.8 579.4,259.9 576.2,258.5 573.5,255.4 572.2,255.8 570.8,256.3"/>
<polyline points="570.8,256.3 570.3,251.3 569.0,247.7 567.2,244.5 566.3,241.3 564.0,238.2 561.7,235.0 559.9,231.8 557.2,228.6 555.4,225.0 554.5,217.9 553.2,209.2 557.0,202.9 558.2,195.4 558.8,190.0 559.6,186.8 560.4,184.4 562.4,182.4 564.8,181.6 568.0,181.4 571.2,181.6 573.6,180.8 575.6,179.2 576.4,177.2 577.2,174.8 578.4,172.8 580.0,170.8 582.0,169.4 583.2,169.4 585.6,169.2 588.0,168.4 590.0,166.4 591.2,164.8 590.8,162.8 591.6,161.2 593.6,159.6 596.0,158.0 598.2,156.8"/>
<polyline points="690.6,226.7 685.6,234.2 679.4,239.1 671.9,244.1 666.9,250.4 661.9,257.9 647.9,264.4 644.2,265.8 642.9,267.6 636.1,275.8 634.3,278.5 629.7,280.3 627.5,284.8 627.9,287.6 624.8,290.0 627.3,295.0 629.8,300.0"/>
<polyline points="631.0,301.2 630.4,303.8 628.5,305.0 625.3,305.6 621.6,306.3 617.8,307.5 615.3,309.4 614.0,311.9 611.5,312.5 610.3,316.3 608.4,319.4"/>
<polyline points="608.4,319.4 605.3,320.1 601.5,320.7 597.8,320.1 594.6,320.7 592.7,323.2 590.2,320.7 589.0,317.6 586.5,315.7 582.7,315.3 580.5,316.3 580.2,320.1 579.6,323.2 577.7,325.1 576.4,327.6 573.9,325.7 570.8,325.7 567.7,327.6 564.5,330.1 561.4,331.3 560.8,334.1 556.4,335.7 551.4,337.6 546.3,339.5 543.2,340.8 542.0,343.2 539.5,344.5 536.3,346.4 533.8,348.3 530.7,350.1 530.0,353.9 528.8,357.7 527.5,361.4 525.0,364.6 521.9,367.1 519.4,369.0"/>
<polyline points="519.4,369.4 520.0,373.8 521.9,378.8 524.4,382.6 526.9,386.3 528.2,388.2 531.3,390.1 535.1,393.9 538.2,396.4 541.3,398.9 543.8,401.4 547.0,403.2 550.1,402.6 552.0,400.1 553.9,403.2 556.4,406.4 558.9,410.1 561.4,413.9 563.9,417.7 566.4,421.4 568.3,426.4 569.5,430.2 570.8,433.4"/>
<polyline points="570.8,433.4 573.9,432.7 577.7,430.8 581.5,429.0 585.2,427.1 589.0,426.4 592.7,426.4 596.5,427.1 599.6,429.0 602.8,431.5 605.3,434.0 607.1,436.5 610.3,436.5 612.8,435.2 615.3,435.9 618.4,435.2 620.9,432.7 624.1,430.2 627.8,427.7 630.4,426.4 633.5,428.3 636.6,429.6 640.4,429.0 644.1,429.6"/>
<polyline points="644.1,429.6 646.3,427.7 646.9,424.6 645.0,421.5 646.3,418.3 648.8,415.2 650.7,412.7 648.8,410.2 650.7,408.3 653.8,407.4 657.5,407.1 660.1,405.2 661.9,401.4 663.2,397.6 665.1,393.9 667.0,390.1 665.1,385.4"/>
<polyline points="537.4,179.9 538.1,174.2 537.4,170.4 533.6,168.7 530.4,165.9 526.1,167.9 522.4,170.9 517.4,173.4 512.4,175.9 507.4,178.4 502.9,179.9 485.3,186.3 482.1,186.8 480.3,186.3 479.0,188.2 477.6,190.9 475.3,193.6 472.6,196.8 469.4,200.4 471.2,202.7 473.5,204.9 474.4,207.2 472.6,208.6 469.9,210.4 468.1,213.1 466.3,214.9 463.5,216.3 460.4,217.6 458.6,218.5"/>
<polyline points="482.1,246.6 483.5,243.5 485.3,238.9 488.0,236.2 491.6,233.5 495.3,231.2 498.9,229.0 501.6,227.9 503.4,229.0 505.2,228.1 508.9,227.1 511.6,227.6 514.3,229.4 517.0,230.3 519.8,231.7 522.5,232.6 525.2,231.7"/>
<polyline points="488.3,168.8 491.7,168.0 495.0,170.5 498.3,172.2 501.7,174.7 502.5,178.8 501.7,180.0 496.7,179.7 491.7,176.3 488.3,172.2 488.3,168.8"/>
<polyline points="476.3,148.5 478.0,147.7 480.3,152.2 483.0,158.0 485.0,162.2 487.0,165.5 485.3,164.3 482.5,159.7 479.7,154.7 477.0,150.5 476.3,148.5"/>
<polyline points="615.3,167.2 614.5,173.0 615.3,178.0 616.2,185.0 618.6,186.6 620.6,188.2 620.2,190.2 619.0,191.8 616.2,193.0 614.2,195.0 612.2,197.0 610.2,199.0 608.6,200.6 607.8,203.4 607.0,205.8 605.4,209.0 603.8,211.4 601.0,213.0 598.2,214.6 596.2,216.6 597.0,218.6 598.2,220.6 599.4,223.4 598.6,225.8 597.8,227.8 596.2,229.5 593.5,233.6 592.6,237.7 592.1,241.3 592.6,244.5 590.3,246.8 588.0,248.1 585.3,249.5 583.9,251.3 584.9,254.0 583.9,255.4 581.7,254.0 579.9,253.1 577.1,252.2 574.9,252.7 573.5,254.5"/>
<polyline points="527.5,386.5 532.5,385.3 540.1,381.5 547.6,377.7 555.1,375.2 557.6,371.5 559.5,366.4 560.8,361.4 562.0,358.9 571.4,360.2 581.5,358.9 586.5,358.3 591.5,356.4 596.5,355.2 601.5,355.8 603.4,358.9"/>
<polyline points="603.4,358.9 607.8,358.3 611.5,355.2 614.7,350.1 616.5,345.8 617.8,342.6 621.6,341.1 625.3,340.4 626.0,336.4 626.6,332.9"/>
<polyline points="626.6,332.9 622.8,329.5 619.7,326.3 615.3,323.2 611.5,321.3 608.4,319.4"/>
<polyline points="629.7,305.0 632.2,307.5 634.7,310.7 636.0,313.8 636.6,317.6 637.2,321.9 634.1,324.4 631.0,327.6 628.5,330.7 626.6,332.9"/>
<polyline points="637.2,321.9 640.4,322.3 645.4,320.1 649.8,317.6 652.9,314.4 655.4,310.7 657.3,306.9 659.2,303.8 661.1,301.2 671.9,281.6 675.6,272.9 678.1,262.9 679.4,254.1 681.9,249.1 686.9,246.6 691.4,245.4"/>
<polyline points="625.3,340.4 626.0,341.4 626.6,343.9 628.5,346.4 627.2,348.3 628.5,351.4 631.0,355.2 633.5,358.9 636.0,362.7 637.9,366.4 639.8,370.2 640.0,371.3 642.5,374.4 646.3,376.6 650.0,377.0 653.2,378.2 655.7,381.3 657.5,383.6 660.7,382.9 663.2,380.7 665.1,382.6 665.1,385.4"/>
<polyline points="603.4,360.0 602.8,363.8 600.3,366.3 597.8,366.9 595.2,369.4 591.5,370.0 587.7,368.8 585.2,371.3 581.5,373.2 580.2,375.1 582.7,380.1 585.2,385.7 586.5,390.1 587.7,393.9 589.0,397.0 595.2,401.4 602.8,403.2 610.3,400.8 614.0,399.5 617.2,397.6 618.4,393.9 621.6,390.7 625.3,388.2 629.1,387.0 631.0,390.1 634.1,392.0 636.0,393.9 639.1,392.9 642.9,393.2 645.6,394.5 645.6,397.6 643.1,399.5 641.2,401.4 643.8,405.2 646.3,408.9 648.1,411.4 648.8,410.2"/>
<polyline points="570.8,256.3 569.9,258.5 568.5,262.2 566.7,265.8 564.9,267.6"/>
<polyline points="572.6,276.7 574.0,274.4 577.1,276.7 579.4,279.4 581.7,281.7 584.4,283.0 586.7,284.4 588.0,283.0 587.1,281.7"/>
<polyline points="588.0,283.0 589.4,281.7 593.5,281.2 597.1,282.6 600.7,283.9 604.3,285.7 607.1,287.6 609.8,290.3 611.6,292.1 617.0,292.5 620.7,292.5 624.3,292.1"/>
<polyline points="447.4,301.2 448.2,303.7 449.9,298.0 452.4,289.7 454.9,282.2 461.7,279.7 464.9,281.2 469.9,278.0 474.9,277.2 479.2,272.2 483.2,266.2 488.2,261.2"/>
<polyline points="518.4,275.5 513.4,279.7 509.1,285.5 510.9,293.0 513.4,301.2 513.4,308.0 515.9,313.7 514.1,321.2 514.9,326.2 508.4,329.7 501.6,337.9 495.9,341.2 496.7,347.2 497.4,351.2"/>
<polyline points="542.6,300.0 543.8,307.5 544.5,315.1 543.8,321.3 542.0,325.1 538.2,330.1 538.8,333.9 540.7,337.6 543.2,340.4"/>
<polyline points="529.9,349.9 522.4,352.4 518.6,356.2 514.9,358.7 507.4,357.4 501.2,354.9 497.4,351.2"/>
<polyline points="457.4,340.4 464.9,343.7 474.9,346.2 482.4,344.9 488.7,348.7 494.9,351.2 497.4,351.2"/>
<polyline points="457.4,341.2 459.9,349.9 464.9,356.2 471.2,361.2 478.7,362.9 477.4,372.4 477.9,379.9 473.7,388.6 468.7,396.1 468.4,400.0 470.3,403.8 472.2,408.1 474.1,412.5 475.9,416.3 477.2,420.1 478.4,424.4 479.7,428.2 480.1,430.1 476.6,431.3 472.8,432.9 469.0,433.9 465.3,434.5 461.5,435.1 459.0,434.9 455.9,436.4 455.9,438.9 457.1,442.0 458.1,443.6"/>
<polyline points="415.1,414.4 418.2,416.9 422.0,418.8 425.1,420.7 427.0,423.8 430.2,426.3 433.3,428.8 436.4,431.3 437.7,434.5 437.1,437.0 433.9,439.5 432.7,442.6 430.8,445.1 427.7,447.4 423.9,448.3 418.9,448.3 413.9,448.9 408.9,450.8 405.1,452.7 402.6,454.2"/>
<polyline points="397.9,450.8 400.1,452.7 402.6,454.2 404.5,457.1 407.0,460.8 409.5,463.9 412.0,467.1 413.2,467.9 415.8,465.8 418.2,464.9 423.3,465.2 428.9,465.2 435.2,465.6 440.2,465.8 441.4,462.7 442.7,458.9 443.3,455.2 442.7,451.4 439.6,450.8 437.7,449.5 440.2,447.6 444.0,446.4 447.7,445.4 451.5,444.9 455.2,444.1 458.1,443.6"/>
<polyline points="423.3,465.2 423.9,469.0 424.5,472.7 426.4,475.9 424.5,478.4 422.0,482.1 418.9,485.9 415.1,489.0 412.6,492.1 412.0,494.0"/>
<polyline points="458.1,443.6 461.5,445.8 465.3,448.3 468.4,450.1 470.3,453.3 472.2,457.1 474.7,460.8 477.2,464.6 479.7,467.7 482.8,469.0 486.6,468.3 488.5,469.6 487.8,472.7 486.0,475.9 483.4,478.4 480.3,481.5 477.2,485.3 474.7,489.0 473.4,492.8 466.2,497.4 467.4,501.2 461.2,507.4 453.7,514.9 446.2,522.4 439.9,528.7 436.2,532.4"/>
<polyline points="488.5,469.6 490.4,470.2 491.6,471.5 491.0,474.0 489.1,476.5 488.5,478.4 492.9,477.1 497.2,475.9 501.6,475.0 506.0,474.2 510.4,473.4 512.3,470.8 514.2,467.7 515.4,465.8 517.3,467.7 519.2,470.2 521.1,470.8 522.3,468.3 523.6,465.2 526.7,464.6 530.5,462.7 533.6,460.8 536.7,460.2 541.0,459.6 547.4,457.0 553.6,458.0"/>
<polyline points="569.5,433.7 562.0,435.0 555.7,438.7 550.7,445.0 549.5,451.2 553.2,457.5 554.5,463.7 558.2,470.0 557.0,475.0 560.7,479.9 565.7,486.2 572.0,489.9 578.2,492.4 583.2,494.9 588.2,493.7 590.7,499.9 597.0,504.9 602.0,509.9 604.5,516.2 603.2,522.4 598.2,528.7 597.0,533.7 603.2,537.4"/>
<polyline points="603.2,537.4 609.5,534.9 616.9,532.4 625.7,533.7 633.2,534.9 635.7,528.7 636.9,522.4 640.7,517.4 644.4,513.7"/>
<polyline points="644.4,513.7 635.7,509.9 631.9,504.9 628.9,498.7 631.9,494.9 636.9,491.2 641.9,486.2 639.4,482.4 636.9,477.5 639.4,472.5 646.9,468.7 655.7,468.7 663.9,467.5 663.2,460.0 659.4,457.5 661.9,451.2 666.9,448.7 669.4,442.5 666.2,436.2 659.4,431.2 651.9,431.2 644.4,430.0"/>
<polyline points="644.4,513.7 650.7,508.7 656.9,506.2 664.4,511.2 671.9,514.4 676.9,509.9 680.6,506.2 682.4,502.4 676.9,499.9 675.6,493.7 676.9,486.2 678.9,478.7 686.9,473.0 690.6,476.2 694.4,481.2 699.4,484.9 705.6,479.9 711.9,482.4 719.4,484.9 726.9,487.4 733.1,491.2 736.9,493.7 744.4,494.9 750.6,496.2 753.1,492.4"/>
<polyline points="473.7,548.6 477.4,544.9 481.2,541.2 479.9,533.7 482.4,529.2 488.7,526.9 497.4,523.7 503.6,521.2 506.1,524.4 511.9,519.4 514.9,515.7 518.6,523.7 524.9,528.7 529.9,533.7 533.6,538.7 538.6,543.7 547.4,543.7 554.9,539.9 562.4,537.4 569.9,539.4 574.9,541.2 582.3,543.7 589.8,542.9 597.3,541.9 602.3,537.4"/>
<polyline points="574.9,541.2 572.4,546.2 567.4,551.1 562.4,556.1 561.1,559.9 563.6,563.6 572.4,564.4 579.9,564.1 582.3,560.4 587.3,558.6 582.3,554.9 581.1,549.9 582.3,543.7"/>
<polyline points="473.7,548.6 462.4,551.1 454.9,554.9 450.7,558.1"/>
<polyline points="473.7,548.8 477.4,548.8 482.4,557.5 488.7,567.5 493.7,576.2 499.9,586.2 504.9,593.7 509.9,601.2 514.9,608.7 518.6,615.0 520.6,617.5 517.4,624.9"/>
<polyline points="563.6,563.7 567.4,570.0 569.4,577.5 569.4,585.0 571.1,592.5 574.9,596.2 581.1,598.0 587.3,600.0 590.3,603.7 589.3,607.5 582.3,609.5 574.9,611.2 571.1,608.7 567.4,610.0 567.9,615.0 565.4,619.9 566.1,626.2 568.6,631.2 572.4,634.9 573.6,641.2"/>
<polyline points="736.9,493.7 731.9,497.4 728.1,503.7 726.4,511.2 728.1,518.7 730.6,524.9 729.4,531.2 733.1,533.7 728.1,537.4 721.9,539.9 714.4,542.4 705.6,542.9 703.1,549.9 700.6,556.1 706.9,560.0 713.1,563.7 716.9,568.7 718.1,575.0 714.4,577.0 719.4,582.5 723.1,588.7 726.4,596.2 726.9,605.0 723.1,609.5 716.9,610.5 710.6,611.2 706.9,609.5 704.4,613.7 703.9,619.9 701.9,626.2 696.9,629.9 693.1,626.2 689.4,628.7 683.1,632.4 676.9,633.7 673.9,638.7 673.1,647.4 672.4,656.2 671.4,664.9 669.4,673.6 667.7,683.6 673.1,686.1 676.9,689.9 676.9,697.4 675.6,702.9"/>
<polyline points="707.1,404.9 706.5,407.7 708.3,411.4 710.8,414.6 713.4,417.7 715.2,420.2 716.5,424.0 718.4,425.9 720.9,424.0 723.4,421.5 725.9,418.3 727.8,415.8 730.3,414.2 733.4,413.7 733.8,415.8 732.1,418.3 730.5,421.5 730.0,425.2 730.5,429.0 730.9,432.8 728.8,435.3 726.8,437.8 727.8,440.3 730.3,442.1 732.1,444.0 735.6,448.7 739.4,452.5 745.6,453.7 746.4,457.0 739.4,458.0 740.6,463.7 743.1,470.0 746.9,475.0 750.6,477.5 753.1,483.7 754.3,489.9 753.1,492.4 754.3,496.2 753.1,501.2 759.3,501.9 765.6,503.7 770.6,507.4 773.1,512.4 771.8,517.4 778.1,518.7 784.3,521.2 790.6,523.7 798.8,524.9"/>
<polyline points="750.6,477.5 756.8,475.0 763.1,470.0 768.1,462.5 773.1,455.0 779.3,450.0 786.8,445.0 794.3,442.5 804.3,441.2 813.0,439.5 818.0,441.2"/>
<polyline points="793.1,599.5 789.3,596.2 788.1,589.5 781.8,590.0 774.3,588.7 766.8,585.0 760.6,586.2 760.1,595.0 761.3,605.0 763.1,612.5 765.6,618.0 761.8,624.9 758.1,632.4 757.3,639.9 760.6,647.4 765.6,653.7 770.6,658.7 774.3,661.2 774.3,656.2 781.8,654.2 788.1,652.4 791.8,651.9 798.8,658.7"/>
<polyline points="806.8,576.2 803.0,580.0 801.8,587.5 796.8,592.5 793.1,599.5 791.8,607.5 790.6,617.5 788.1,627.4 787.3,637.4 786.8,647.4 786.3,651.9"/>
<polyline points="790.6,618.0 796.8,619.4 803.0,620.7 809.3,623.7 813.0,627.4 814.3,621.2 819.3,619.9 824.3,616.2 826.8,610.0 829.3,603.7 831.8,598.7 839.3,600.5 844.3,603.7 848.0,603.0"/>
<polygon points="455.7,588.4 464.2,585.6 461.8,590.6 461.2,594.6 459.6,595.2 459.3,592.2 455.7,588.4" fill="#fff" stroke-width="0.9"/>
</g>
<g fill="none" stroke="#4f9a66" stroke-width="1.3" stroke-linejoin="round"><polygon points="740.3,286.3 742.8,288.8 745.9,291.1 749.1,292.6 752.8,293.2 756.6,292.9 759.1,291.3 761.0,288.8 760.1,292.6 760.4,297.0 761.4,301.3 761.0,305.7 759.1,308.9 757.2,312.0 757.6,315.8 756.0,318.9 753.5,321.4 751.0,323.3 749.1,325.2 750.3,327.7 748.8,330.2 749.7,332.1 747.6,333.9 746.6,336.4 747.2,339.6 745.3,342.1 742.8,344.0 740.3,346.5 738.4,349.0 739.0,352.1 737.5,355.3 735.9,358.4 734.7,361.5 739.7,350.0 738.4,354.4 735.9,358.1 734.0,362.5 732.5,366.9 732.1,370.1 729.6,372.6 726.5,375.1 723.4,377.0 722.1,380.1 722.1,383.2 720.9,387.0 719.0,390.1 716.5,393.2 714.0,397.0 711.5,400.1 709.0,403.3 707.1,404.9 705.2,402.7 702.7,402.0 698.9,403.3 695.2,402.7 691.4,401.1 687.0,399.9 682.6,398.6 678.9,397.6 677.6,399.5 675.7,400.8 672.6,398.3 672.0,395.1 670.7,392.0 667.6,388.9 665.1,385.4 667.0,382.9 669.5,380.7 672.0,378.2 673.2,374.4 674.5,370.7 677.0,366.9 679.5,362.5 681.4,358.1 683.2,353.8 685.8,350.0 679.5,363.4 681.4,359.0 683.2,355.3 685.8,352.1 688.9,349.6 692.0,346.5 695.2,343.4 697.7,340.2 698.7,336.4 699.9,332.7 701.4,328.9 701.7,325.2 702.7,321.4 703.9,317.6 705.2,313.9 706.2,310.1 707.1,306.4 708.7,303.6 711.5,302.9 715.2,302.9 717.1,300.7 720.2,299.5 721.5,296.3 722.8,293.8 725.3,291.9 727.8,290.1 730.3,288.2 732.8,286.6 736.5,286.3 740.3,286.3"/><polyline points="761.0,288.8 764.1,286.9 767.9,285.7 772.3,285.3 776.0,285.7 777.9,287.6 778.5,289.4 776.0,290.3 772.3,290.1 769.1,288.8 765.4,288.8 762.2,289.8 761.0,288.8"/></g></svg>
<svg class="i" style="left:300px;top:84px;" width="250" height="30" viewBox="0 0 250 30"><path d="M8.5 23.5v-6h206v6" stroke="#000" stroke-width="1.4" fill="none"/></svg>
<span class="t " style="left:305.00px;top:86.50px;font-size:12px;color:#000;transform:scaleX(0.9500);">0</span>
<span class="t " style="left:508.00px;top:86.50px;font-size:12px;color:#000;transform:scaleX(0.9500);">20</span>
<span class="t " style="left:519.00px;top:95.50px;font-size:12px;color:#000;transform:scaleX(0.9500);">km</span>
<span class="t " style="left:891.50px;top:713.00px;font-size:9.9px;color:#000;transform:scaleX(0.8897);">© QGIS 2017</span>
<div class="b" style="left:0;top:0;width:1333px;height:750px;will-change:transform;">
<span class="t " style="left:501.80px;top:133.50px;font-size:9.3px;color:#262626;transform:scaleX(0.8239);text-shadow:1.3px 0 0 #fff,-1.3px 0 0 #fff,0 1.3px 0 #fff,0 -1.3px 0 #fff,1px 1px 0 #fff,-1px -1px 0 #fff,1px -1px 0 #fff,-1px 1px 0 #fff,0 0 1.5px #fff,0 0 2px #fff;">Sillano</span>
<span class="t " style="left:506.80px;top:143.30px;font-size:9.3px;color:#262626;transform:scaleX(0.8379);text-shadow:1.3px 0 0 #fff,-1.3px 0 0 #fff,0 1.3px 0 #fff,0 -1.3px 0 #fff,1px 1px 0 #fff,-1px -1px 0 #fff,1px -1px 0 #fff,-1px 1px 0 #fff,0 0 1.5px #fff,0 0 2px #fff;">371</span>
<span class="t " style="left:504.80px;top:152.70px;font-size:9.3px;color:#262626;transform:scaleX(0.9393);text-shadow:1.3px 0 0 #fff,-1.3px 0 0 #fff,0 1.3px 0 #fff,0 -1.3px 0 #fff,1px 1px 0 #fff,-1px -1px 0 #fff,1px -1px 0 #fff,-1px 1px 0 #fff,0 0 1.5px #fff,0 0 2px #fff;">3,08</span>
<span class="t " style="left:487.90px;top:177.20px;font-size:9.3px;color:#262626;transform:scaleX(0.8240);text-shadow:1.3px 0 0 #fff,-1.3px 0 0 #fff,0 1.3px 0 #fff,0 -1.3px 0 #fff,1px 1px 0 #fff,-1px -1px 0 #fff,1px -1px 0 #fff,-1px 1px 0 #fff,0 0 1.5px #fff,0 0 2px #fff;">Piazza</span>
<span class="t " style="left:496.40px;top:186.70px;font-size:9.3px;color:#262626;transform:scaleX(0.8290);text-shadow:1.3px 0 0 #fff,-1.3px 0 0 #fff,0 1.3px 0 #fff,0 -1.3px 0 #fff,1px 1px 0 #fff,-1px -1px 0 #fff,1px -1px 0 #fff,-1px 1px 0 #fff,0 0 1.5px #fff,0 0 2px #fff;">al</span>
<span class="t " style="left:485.90px;top:196.20px;font-size:9.3px;color:#262626;transform:scaleX(0.8563);text-shadow:1.3px 0 0 #fff,-1.3px 0 0 #fff,0 1.3px 0 #fff,0 -1.3px 0 #fff,1px 1px 0 #fff,-1px -1px 0 #fff,1px -1px 0 #fff,-1px 1px 0 #fff,0 0 1.5px #fff,0 0 2px #fff;">Serchio</span>
<span class="t " style="left:492.90px;top:205.90px;font-size:9.3px;color:#262626;transform:scaleX(0.8379);text-shadow:1.3px 0 0 #fff,-1.3px 0 0 #fff,0 1.3px 0 #fff,0 -1.3px 0 #fff,1px 1px 0 #fff,-1px -1px 0 #fff,1px -1px 0 #fff,-1px 1px 0 #fff,0 0 1.5px #fff,0 0 2px #fff;">614</span>
<span class="t " style="left:490.90px;top:215.40px;font-size:9.3px;color:#262626;transform:scaleX(0.9393);text-shadow:1.3px 0 0 #fff,-1.3px 0 0 #fff,0 1.3px 0 #fff,0 -1.3px 0 #fff,1px 1px 0 #fff,-1px -1px 0 #fff,1px -1px 0 #fff,-1px 1px 0 #fff,0 0 1.5px #fff,0 0 2px #fff;">3,86</span>
<span class="t " style="left:503.65px;top:241.90px;font-size:9.3px;color:#262626;transform:scaleX(0.8687);text-shadow:1.3px 0 0 #fff,-1.3px 0 0 #fff,0 1.3px 0 #fff,0 -1.3px 0 #fff,1px 1px 0 #fff,-1px -1px 0 #fff,1px -1px 0 #fff,-1px 1px 0 #fff,0 0 1.5px #fff,0 0 2px #fff;">Camporgiano</span>
<span class="t " style="left:521.40px;top:251.60px;font-size:9.3px;color:#262626;transform:scaleX(0.8379);text-shadow:1.3px 0 0 #fff,-1.3px 0 0 #fff,0 1.3px 0 #fff,0 -1.3px 0 #fff,1px 1px 0 #fff,-1px -1px 0 #fff,1px -1px 0 #fff,-1px 1px 0 #fff,0 0 1.5px #fff,0 0 2px #fff;">578</span>
<span class="t " style="left:519.40px;top:261.10px;font-size:9.3px;color:#262626;transform:scaleX(0.9393);text-shadow:1.3px 0 0 #fff,-1.3px 0 0 #fff,0 1.3px 0 #fff,0 -1.3px 0 #fff,1px 1px 0 #fff,-1px -1px 0 #fff,1px -1px 0 #fff,-1px 1px 0 #fff,0 0 1.5px #fff,0 0 2px #fff;">3,76</span>
<span class="t " style="left:608.60px;top:189.40px;font-size:9.3px;color:#262626;transform:scaleX(0.8694);text-shadow:1.3px 0 0 #fff,-1.3px 0 0 #fff,0 1.3px 0 #fff,0 -1.3px 0 #fff,1px 1px 0 #fff,-1px -1px 0 #fff,1px -1px 0 #fff,-1px 1px 0 #fff,0 0 1.5px #fff,0 0 2px #fff;">Castiglione</span>
<span class="t " style="left:625.10px;top:199.20px;font-size:9.3px;color:#262626;transform:scaleX(0.9671);text-shadow:1.3px 0 0 #fff,-1.3px 0 0 #fff,0 1.3px 0 #fff,0 -1.3px 0 #fff,1px 1px 0 #fff,-1px -1px 0 #fff,1px -1px 0 #fff,-1px 1px 0 #fff,0 0 1.5px #fff,0 0 2px #fff;">di</span>
<span class="t " style="left:607.10px;top:208.70px;font-size:9.3px;color:#262626;transform:scaleX(0.8755);text-shadow:1.3px 0 0 #fff,-1.3px 0 0 #fff,0 1.3px 0 #fff,0 -1.3px 0 #fff,1px 1px 0 #fff,-1px -1px 0 #fff,1px -1px 0 #fff,-1px 1px 0 #fff,0 0 1.5px #fff,0 0 2px #fff;">Garfagnana</span>
<span class="t " style="left:622.10px;top:218.40px;font-size:9.3px;color:#262626;transform:scaleX(0.8379);text-shadow:1.3px 0 0 #fff,-1.3px 0 0 #fff,0 1.3px 0 #fff,0 -1.3px 0 #fff,1px 1px 0 #fff,-1px -1px 0 #fff,1px -1px 0 #fff,-1px 1px 0 #fff,0 0 1.5px #fff,0 0 2px #fff;">714</span>
<span class="t " style="left:620.10px;top:228.10px;font-size:9.3px;color:#262626;transform:scaleX(0.9393);text-shadow:1.3px 0 0 #fff,-1.3px 0 0 #fff,0 1.3px 0 #fff,0 -1.3px 0 #fff,1px 1px 0 #fff,-1px -1px 0 #fff,1px -1px 0 #fff,-1px 1px 0 #fff,0 0 1.5px #fff,0 0 2px #fff;">2,55</span>
<span class="t " style="left:631.50px;top:264.70px;font-size:9.3px;color:#262626;transform:scaleX(0.8598);text-shadow:1.3px 0 0 #fff,-1.3px 0 0 #fff,0 1.3px 0 #fff,0 -1.3px 0 #fff,1px 1px 0 #fff,-1px -1px 0 #fff,1px -1px 0 #fff,-1px 1px 0 #fff,0 0 1.5px #fff,0 0 2px #fff;">Fosciandora</span>
<span class="t " style="left:647.00px;top:274.50px;font-size:9.3px;color:#262626;transform:scaleX(0.8379);text-shadow:1.3px 0 0 #fff,-1.3px 0 0 #fff,0 1.3px 0 #fff,0 -1.3px 0 #fff,1px 1px 0 #fff,-1px -1px 0 #fff,1px -1px 0 #fff,-1px 1px 0 #fff,0 0 1.5px #fff,0 0 2px #fff;">193</span>
<span class="t " style="left:645.00px;top:284.20px;font-size:9.3px;color:#262626;transform:scaleX(0.9393);text-shadow:1.3px 0 0 #fff,-1.3px 0 0 #fff,0 1.3px 0 #fff,0 -1.3px 0 #fff,1px 1px 0 #fff,-1px -1px 0 #fff,1px -1px 0 #fff,-1px 1px 0 #fff,0 0 1.5px #fff,0 0 2px #fff;">3,12</span>
<span class="t " style="left:666.00px;top:297.50px;font-size:9.3px;color:#262626;transform:scaleX(0.8440);text-shadow:1.3px 0 0 #fff,-1.3px 0 0 #fff,0 1.3px 0 #fff,0 -1.3px 0 #fff,1px 1px 0 #fff,-1px -1px 0 #fff,1px -1px 0 #fff,-1px 1px 0 #fff,0 0 1.5px #fff,0 0 2px #fff;">Barga*</span>
<span class="t " style="left:669.00px;top:306.70px;font-size:9.3px;color:#262626;transform:scaleX(0.8701);text-shadow:1.3px 0 0 #fff,-1.3px 0 0 #fff,0 1.3px 0 #fff,0 -1.3px 0 #fff,1px 1px 0 #fff,-1px -1px 0 #fff,1px -1px 0 #fff,-1px 1px 0 #fff,0 0 1.5px #fff,0 0 2px #fff;">2088</span>
<span class="t " style="left:669.50px;top:316.50px;font-size:9.3px;color:#262626;transform:scaleX(0.9393);text-shadow:1.3px 0 0 #fff,-1.3px 0 0 #fff,0 1.3px 0 #fff,0 -1.3px 0 #fff,1px 1px 0 #fff,-1px -1px 0 #fff,1px -1px 0 #fff,-1px 1px 0 #fff,0 0 1.5px #fff,0 0 2px #fff;">4,81</span>
<span class="t " style="left:553.90px;top:331.90px;font-size:9.3px;color:#262626;transform:scaleX(0.8227);text-shadow:1.3px 0 0 #fff,-1.3px 0 0 #fff,0 1.3px 0 #fff,0 -1.3px 0 #fff,1px 1px 0 #fff,-1px -1px 0 #fff,1px -1px 0 #fff,-1px 1px 0 #fff,0 0 1.5px #fff,0 0 2px #fff;">Molazzana</span>
<span class="t " style="left:565.90px;top:341.40px;font-size:9.3px;color:#262626;transform:scaleX(0.8379);text-shadow:1.3px 0 0 #fff,-1.3px 0 0 #fff,0 1.3px 0 #fff,0 -1.3px 0 #fff,1px 1px 0 #fff,-1px -1px 0 #fff,1px -1px 0 #fff,-1px 1px 0 #fff,0 0 1.5px #fff,0 0 2px #fff;">260</span>
<span class="t " style="left:563.90px;top:351.20px;font-size:9.3px;color:#262626;transform:scaleX(0.9393);text-shadow:1.3px 0 0 #fff,-1.3px 0 0 #fff,0 1.3px 0 #fff,0 -1.3px 0 #fff,1px 1px 0 #fff,-1px -1px 0 #fff,1px -1px 0 #fff,-1px 1px 0 #fff,0 0 1.5px #fff,0 0 2px #fff;">4,01</span>
<span class="t " style="left:573.10px;top:374.20px;font-size:9.3px;color:#262626;transform:scaleX(0.8706);text-shadow:1.3px 0 0 #fff,-1.3px 0 0 #fff,0 1.3px 0 #fff,0 -1.3px 0 #fff,1px 1px 0 #fff,-1px -1px 0 #fff,1px -1px 0 #fff,-1px 1px 0 #fff,0 0 1.5px #fff,0 0 2px #fff;">Fabbriche</span>
<span class="t " style="left:587.60px;top:383.70px;font-size:9.3px;color:#262626;transform:scaleX(0.9671);text-shadow:1.3px 0 0 #fff,-1.3px 0 0 #fff,0 1.3px 0 #fff,0 -1.3px 0 #fff,1px 1px 0 #fff,-1px -1px 0 #fff,1px -1px 0 #fff,-1px 1px 0 #fff,0 0 1.5px #fff,0 0 2px #fff;">di</span>
<span class="t " style="left:572.10px;top:393.40px;font-size:9.3px;color:#262626;transform:scaleX(0.9189);text-shadow:1.3px 0 0 #fff,-1.3px 0 0 #fff,0 1.3px 0 #fff,0 -1.3px 0 #fff,1px 1px 0 #fff,-1px -1px 0 #fff,1px -1px 0 #fff,-1px 1px 0 #fff,0 0 1.5px #fff,0 0 2px #fff;">Vergemoli</span>
<span class="t " style="left:584.60px;top:403.10px;font-size:9.3px;color:#262626;transform:scaleX(0.8379);text-shadow:1.3px 0 0 #fff,-1.3px 0 0 #fff,0 1.3px 0 #fff,0 -1.3px 0 #fff,1px 1px 0 #fff,-1px -1px 0 #fff,1px -1px 0 #fff,-1px 1px 0 #fff,0 0 1.5px #fff,0 0 2px #fff;">481</span>
<span class="t " style="left:582.60px;top:412.90px;font-size:9.3px;color:#262626;transform:scaleX(0.9393);text-shadow:1.3px 0 0 #fff,-1.3px 0 0 #fff,0 1.3px 0 #fff,0 -1.3px 0 #fff,1px 1px 0 #fff,-1px -1px 0 #fff,1px -1px 0 #fff,-1px 1px 0 #fff,0 0 1.5px #fff,0 0 2px #fff;">1,60</span>
</div>
<svg class="i" style="left:712px;top:189px;" width="17" height="22" viewBox="0 0 17 22"><path d="M4.3 12.6V2Q4.3 0.7 5.8 0.7H10.8Q12.8 0.9 13.8 2Q15.7 3 15.7 5V15Q15.7 19 13 20.4Q10 21.4 8 20.4Q5 19 3 16L0.6 12.6Q-0.1 11.1 1.2 10.7Q2.6 10.5 4.3 12.6z" fill="#fff" stroke="#3a3a3a" stroke-width="1"/><path d="M7.2 1.2V9.4M9.9 1.2V9.4" stroke="#444" stroke-width="0.9"/><path d="M12.7 2V9.4" stroke="#111" stroke-width="1.4"/></svg>
<div class="b " style="left:952px;top:85px;width:381px;height:17px;background:linear-gradient(#dcdcdc,#d2d2d2);border-top:1px solid #e8e8e8;"></div>
<span class="t " style="left:957.00px;top:86.50px;font-size:9.9px;color:#000;transform:scaleX(0.9515);">com_prov_lucca :: Features Total: 33, Filtered: 33, Selected: 0</span>
<svg class="i" style="left:1309px;top:90px;" width="22" height="8" viewBox="0 0 22 8"><path d="M1.5 2.5h4v4h-4z M2.5 2.5v-1.5h4v4h-1" stroke="#111" stroke-width="1" fill="none"/><path d="M14.5 1l5 5.5m0-5.5l-5 5.5" stroke="#111" stroke-width="1.4" fill="none"/></svg>
<svg class="i" style="left:954.7px;top:106.5px;" width="12" height="12" viewBox="0 0 16 16"><path d="M11 1l3 1.600-6.800 11-3-1.800z" fill="#f1c81e" stroke="#c99e08" stroke-width="0.700"/><path d="M4.200 11.800l3 1.800-3.700 2z" fill="#e9d8b0" stroke="#8a7a55" stroke-width="0.500"/><path d="M3.500 15.600l0.300-1.500 1 0.700z" fill="#333"/><path d="M11 1l3 1.600-0.800 1.300-3-1.700z" fill="#d98a8a"/></svg>
<svg class="i" style="left:970.7px;top:106.5px;" width="12" height="12" viewBox="0 0 16 16"><rect x="1.500" y="2.500" width="11" height="11" fill="#e0e0e0" stroke="#b0b0b0" stroke-width="0.900"/><path d="M5 13l8-9 1.800 1.500-8 9-2.300 0.600z" fill="#b5b5b5"/></svg>
<svg class="i" style="left:986.3px;top:106.5px;" width="12" height="12" viewBox="0 0 16 16"><rect x="1" y="1" width="14" height="14" rx="1.6" fill="#b2b2b2"/><rect x="3.6" y="2.2" width="8.8" height="5" fill="#d0d0d0"/><rect x="4" y="10" width="8" height="4" fill="#e6e6e6"/><rect x="5.3" y="10.8" width="1.8" height="2.4" fill="#b2b2b2"/></svg>
<svg class="i" style="left:1003.0px;top:106.5px;" width="12" height="12" viewBox="0 0 16 16"><path d="M2.2 7.2a6 6 0 0 1 10.4-3.4" fill="none" stroke="#4d83c3" stroke-width="2.6"/><path d="M15.6 1.4v6h-6z" fill="#4d83c3"/><path d="M13.8 8.8a6 6 0 0 1-10.4 3.4" fill="none" stroke="#4d83c3" stroke-width="2.6"/><path d="M0.4 14.6v-6h6z" fill="#4d83c3"/></svg>
<svg class="i" style="left:1023.0px;top:106.5px;" width="12" height="12" viewBox="0 0 16 16"><rect x="1" y="2" width="12" height="10" fill="#e8e8e8" stroke="#b0b0b0" stroke-width="0.900"/><path d="M1 5.500h12M5 2v10" stroke="#b0b0b0" stroke-width="0.800"/><rect x="8.500" y="8.500" width="7" height="7" rx="1" fill="#bcbcbc"/></svg>
<svg class="i" style="left:1039.0px;top:106.5px;" width="12" height="12" viewBox="0 0 16 16"><path d="M2 4h12M6 4V2.500h4V4" fill="none" stroke="#a2a2a2" stroke-width="1.300"/><path d="M3.200 5.500h9.600l-0.700 9.500H3.900z" fill="#f4f4f4" stroke="#a2a2a2" stroke-width="1.300"/><path d="M6 7v6.500M8 7v6.500M10 7v6.500" stroke="#b5b5b5" stroke-width="1"/></svg>
<svg class="i" style="left:1055.7px;top:106.5px;" width="12" height="12" viewBox="0 0 16 16"><path d="M1 4l10 5M1 7.500l10-3" stroke="#b0b0b0" stroke-width="1.400"/><circle cx="13" cy="5" r="2" fill="none" stroke="#a5a5a5" stroke-width="1.300"/><circle cx="12.500" cy="11" r="2" fill="none" stroke="#a5a5a5" stroke-width="1.300"/></svg>
<svg class="i" style="left:1070.7px;top:106.5px;" width="12" height="12" viewBox="0 0 16 16"><path d="M5.5 1.5h5l3.5 3.5v6.5h-8.5z" fill="#f2f2f2" stroke="#b3b3b3" stroke-width="1"/><path d="M10.5 1.5v3.5h3.5" fill="none" stroke="#b3b3b3" stroke-width="1"/><path d="M2.5 4.5h5l3.5 3.5v6.5h-8.5z" fill="#f2f2f2" stroke="#b3b3b3" stroke-width="1"/><path d="M7.5 4.5v3.5h3.5" fill="none" stroke="#b3b3b3" stroke-width="1"/></svg>
<svg class="i" style="left:1087.0px;top:106.5px;" width="12" height="12" viewBox="0 0 16 16"><rect x="2.500" y="2" width="11" height="13" rx="1" fill="#dcdcdc" stroke="#b0b0b0" stroke-width="1"/><rect x="5.500" y="0.800" width="5" height="2.600" fill="#c2c2c2"/><rect x="5" y="5.500" width="7" height="8" fill="#f4f4f4" stroke="#b8b8b8" stroke-width="0.700"/></svg>
<svg class="i" style="left:1108.0px;top:106.5px;" width="12" height="12" viewBox="0 0 16 16"><text x="0" y="9" font-family="Liberation Serif,serif" font-size="11" fill="#8a4a9a">ε</text><rect x="6" y="6.500" width="9.500" height="9" fill="#f3cf32" stroke="#d3ab10" stroke-width="0.700"/></svg>
<svg class="i" style="left:1124.0px;top:106.5px;" width="12" height="12" viewBox="0 0 16 16"><rect x="1" y="2" width="14" height="12" rx="1" fill="#f3cf32" stroke="#d3ab10" stroke-width="0.800"/><path d="M3 6h10M3 10h10" stroke="#fff7c0" stroke-width="1.600"/></svg>
<svg class="i" style="left:1140.0px;top:106.5px;" width="12" height="12" viewBox="0 0 16 16"><path d="M1.500 2.500h13v11h-13z" fill="#fff" stroke="#d3ab10" stroke-width="0.900"/><path d="M1.500 2.500l13 11h-13z" fill="#f3cf32"/></svg>
<svg class="i" style="left:1155.7px;top:106.5px;" width="12" height="12" viewBox="0 0 16 16"><rect x="1" y="1" width="10.5" height="10.5" fill="#f3cf32" stroke="#d3ab10" stroke-width="0.7"/><rect x="8.5" y="8.5" width="7.3" height="7.3" rx="1.4" fill="#d94a45"/><circle cx="12.1" cy="12.1" r="2.2" fill="none" stroke="#fff" stroke-width="1"/><path d="M10.6 13.6l3-3" stroke="#fff" stroke-width="1"/></svg>
<svg class="i" style="left:1171.7px;top:106.5px;" width="12" height="12" viewBox="0 0 16 16"><path d="M1 3h14l-5.500 6v6l-3-1.500V9z" fill="#4d83c3"/><rect x="1" y="1.200" width="14" height="2.200" fill="#f0c92c"/></svg>
<svg class="i" style="left:1188.0px;top:106.5px;" width="12" height="12" viewBox="0 0 16 16"><rect x="1" y="1.500" width="14" height="13" fill="#4d83c3"/><rect x="2.500" y="3" width="11" height="4.500" fill="#f3cf32"/><path d="M8 14V9M5.500 11L8 8.500l2.500 2.500" stroke="#fff" stroke-width="1.300" fill="none"/></svg>
<svg class="i" style="left:1204.0px;top:106.5px;" width="12" height="12" viewBox="0 0 16 16"><rect x="3" y="3" width="10" height="10" fill="#f3cf32"/><path d="M8 0l3 3.6H5zM8 16l3-3.6H5zM0 8l3.6-3v6zM16 8l-3.6-3v6z" fill="#4d83c3"/></svg>
<svg class="i" style="left:1220.0px;top:106.5px;" width="12" height="12" viewBox="0 0 16 16"><rect x="2" y="1.5" width="7" height="9" fill="#f3cf32" stroke="#d4ac12" stroke-width="0.6"/><path d="M6.9 9.1L1.5 14.5" stroke="#333" stroke-width="2.6" stroke-linecap="round"/><path d="M6.3 9.9L1.7 14.3" stroke="#e9b80f" stroke-width="1.6" stroke-linecap="round"/><circle cx="10.5" cy="5.5" r="4.6" fill="#f4f0e2" stroke="#8d8d8d" stroke-width="1.1"/></svg>
<svg class="i" style="left:1240.7px;top:106.5px;" width="12" height="12" viewBox="0 0 16 16"><rect x="2" y="2" width="12" height="12" fill="#e6e6e6" stroke="#b5b5b5" stroke-width="0.900"/><path d="M6 2v12M10 2v12" stroke="#b5b5b5" stroke-width="0.800"/><rect x="6" y="2" width="4" height="12" fill="#cfcfcf"/></svg>
<svg class="i" style="left:1256.7px;top:106.5px;" width="12" height="12" viewBox="0 0 16 16"><rect x="2" y="2" width="12" height="12" fill="#e6e6e6" stroke="#b5b5b5" stroke-width="0.900"/><path d="M6 2v12M10 2v12" stroke="#b5b5b5" stroke-width="0.800"/><rect x="6" y="2" width="4" height="12" fill="#cfcfcf"/></svg>
<svg class="i" style="left:1272.7px;top:106.5px;" width="12" height="12" viewBox="0 0 16 16"><path d="M1.5 1.5v13M14.5 1.5v13M0.5 14.8h15" stroke="#777" stroke-width="1.3"/><path d="M1.5 4h13M1.5 8h13M1.5 12h13" stroke="#999" stroke-width="0.6"/><circle cx="5" cy="4" r="1.5" fill="#fff" stroke="#d9534f" stroke-width="1"/><circle cx="11" cy="4" r="1.5" fill="#fff" stroke="#d9534f" stroke-width="1"/><circle cx="4.5" cy="8" r="1.5" fill="#fff" stroke="#5cb85c" stroke-width="1"/><circle cx="8" cy="8" r="1.5" fill="#fff" stroke="#5cb85c" stroke-width="1"/><circle cx="5" cy="12" r="1.5" fill="#fff" stroke="#5b9bd5" stroke-width="1"/><circle cx="8.5" cy="12" r="1.5" fill="#fff" stroke="#5b9bd5" stroke-width="1"/><circle cx="12" cy="12" r="1.5" fill="#fff" stroke="#5b9bd5" stroke-width="1"/></svg>
<svg class="i" style="left:1293.0px;top:106.5px;" width="12" height="12" viewBox="0 0 16 16"><rect x="1" y="2" width="14" height="12" fill="#f4f4f4" stroke="#b0b0b0" stroke-width="0.900"/><rect x="2" y="3" width="12" height="3" fill="#d9534f"/><rect x="2" y="6.500" width="12" height="3" fill="#5cb85c"/><rect x="2" y="10" width="12" height="3" fill="#cfcfcf"/></svg>
<div class="b " style="left:1019px;top:105px;width:1px;height:15px;background:#d0d0d0;"></div>
<div class="b " style="left:1104px;top:105px;width:1px;height:15px;background:#d0d0d0;"></div>
<div class="b " style="left:1236px;top:105px;width:1px;height:15px;background:#d0d0d0;"></div>
<div class="b " style="left:1289px;top:105px;width:1px;height:15px;background:#d0d0d0;"></div>
<div class="b " style="left:1310px;top:105px;width:1px;height:15px;background:#d0d0d0;"></div>
<div class="b " style="left:952px;top:121px;width:381px;height:587px;background:#fff;border:1px solid #9aa0a8;"></div>
<div class="b" style="left:953px;top:122px;width:366px;height:571px;overflow:hidden;background:#fff;">
<span class="t " style="left:52.50px;top:3.00px;font-size:9.9px;color:#000;transform:scaleX(0.9841);">gid</span>
<span class="t " style="left:212.50px;top:3.00px;font-size:9.9px;color:#000;transform:scaleX(1.0096);">nome</span>
<div class="b " style="left:16px;top:45.349999999999994px;width:350px;height:25.7px;background:#f5f5f5;"></div>
<div class="b " style="left:16px;top:96.75px;width:350px;height:25.7px;background:#f5f5f5;"></div>
<div class="b " style="left:16px;top:148.14999999999998px;width:350px;height:25.7px;background:#f5f5f5;"></div>
<div class="b " style="left:16px;top:199.55px;width:350px;height:25.7px;background:#f5f5f5;"></div>
<div class="b " style="left:16px;top:250.95px;width:350px;height:25.7px;background:#f5f5f5;"></div>
<div class="b " style="left:16px;top:302.35px;width:350px;height:25.7px;background:#f5f5f5;"></div>
<div class="b " style="left:16px;top:353.75px;width:350px;height:25.7px;background:#f5f5f5;"></div>
<div class="b " style="left:16px;top:405.15px;width:350px;height:25.7px;background:#f5f5f5;"></div>
<div class="b " style="left:16px;top:456.54999999999995px;width:350px;height:25.7px;background:#f5f5f5;"></div>
<div class="b " style="left:16px;top:507.95000000000005px;width:350px;height:25.7px;background:#f5f5f5;"></div>
<div class="b " style="left:16px;top:559.35px;width:350px;height:25.7px;background:#f5f5f5;"></div>
<div class="b " style="left:16px;top:44.55000000000001px;width:350px;height:1px;background:#dcdcdc;"></div>
<span class="t " style="left:3.00px;top:25.50px;font-size:9.9px;color:#000;transform:scaleX(0.9000);">1</span>
<span class="t " style="left:95.55px;top:25.50px;font-size:9.9px;color:#000;transform:scaleX(0.9000);">4</span>
<span class="t " style="left:105.00px;top:25.50px;font-size:9.9px;color:#000;transform:scaleX(0.8789);">VILLA COLLEMANDINA</span>
<span class="t " style="left:349.00px;top:25.50px;font-size:9.9px;color:#000;transform:scaleX(0.9082);">460</span>
<div class="b " style="left:16px;top:70.25px;width:350px;height:1px;background:#dcdcdc;"></div>
<span class="t " style="left:3.00px;top:51.20px;font-size:9.9px;color:#000;transform:scaleX(0.9000);">2</span>
<span class="t " style="left:90.59px;top:51.20px;font-size:9.9px;color:#000;transform:scaleX(0.9000);">25</span>
<span class="t " style="left:105.00px;top:51.20px;font-size:9.9px;color:#000;transform:scaleX(0.8584);">VILLA BASILICA</span>
<span class="t " style="left:349.00px;top:51.20px;font-size:9.9px;color:#000;transform:scaleX(0.9082);">460</span>
<div class="b " style="left:16px;top:95.94999999999999px;width:350px;height:1px;background:#dcdcdc;"></div>
<span class="t " style="left:3.00px;top:76.90px;font-size:9.9px;color:#000;transform:scaleX(0.9000);">3</span>
<span class="t " style="left:90.59px;top:76.90px;font-size:9.9px;color:#000;transform:scaleX(0.9000);">30</span>
<span class="t " style="left:105.00px;top:76.90px;font-size:9.9px;color:#000;transform:scaleX(0.8513);">VIAREGGIO</span>
<span class="t " style="left:349.00px;top:76.90px;font-size:9.9px;color:#000;transform:scaleX(0.9082);">460</span>
<div class="b " style="left:16px;top:121.65px;width:350px;height:1px;background:#dcdcdc;"></div>
<span class="t " style="left:3.00px;top:102.60px;font-size:9.9px;color:#000;transform:scaleX(0.9000);">4</span>
<span class="t " style="left:90.59px;top:102.60px;font-size:9.9px;color:#000;transform:scaleX(0.9000);">12</span>
<span class="t " style="left:105.00px;top:102.60px;font-size:9.9px;color:#000;transform:scaleX(0.8449);">VAGLI SOTTO</span>
<span class="t " style="left:349.00px;top:102.60px;font-size:9.9px;color:#000;transform:scaleX(0.9082);">460</span>
<div class="b " style="left:16px;top:147.35000000000002px;width:350px;height:1px;background:#dcdcdc;"></div>
<span class="t " style="left:3.00px;top:128.30px;font-size:9.9px;color:#000;transform:scaleX(0.9000);">5</span>
<span class="t " style="left:90.59px;top:128.30px;font-size:9.9px;color:#000;transform:scaleX(0.9000);">18</span>
<span class="t " style="left:105.00px;top:128.30px;font-size:9.9px;color:#000;transform:scaleX(0.8451);">STAZZEMA</span>
<span class="t " style="left:349.00px;top:128.30px;font-size:9.9px;color:#000;transform:scaleX(0.9082);">460</span>
<div class="b " style="left:16px;top:173.05px;width:350px;height:1px;background:#dcdcdc;"></div>
<span class="t " style="left:3.00px;top:154.00px;font-size:9.9px;color:#000;transform:scaleX(0.9000);">6</span>
<span class="t " style="left:90.59px;top:154.00px;font-size:9.9px;color:#000;transform:scaleX(0.9000);">35</span>
<span class="t " style="left:105.00px;top:154.00px;font-size:9.9px;color:#000;transform:scaleX(0.8756);">SILLANO GIUNCUGNANO</span>
<span class="t " style="left:349.00px;top:154.00px;font-size:9.9px;color:#000;transform:scaleX(0.9082);">460</span>
<div class="b " style="left:16px;top:198.75px;width:350px;height:1px;background:#dcdcdc;"></div>
<span class="t " style="left:3.00px;top:179.70px;font-size:9.9px;color:#000;transform:scaleX(0.9000);">7</span>
<span class="t " style="left:90.59px;top:179.70px;font-size:9.9px;color:#000;transform:scaleX(0.9000);">20</span>
<span class="t " style="left:105.00px;top:179.70px;font-size:9.9px;color:#000;transform:scaleX(0.8137);">SERAVEZZA</span>
<span class="t " style="left:349.00px;top:179.70px;font-size:9.9px;color:#000;transform:scaleX(0.9082);">460</span>
<div class="b " style="left:16px;top:224.45px;width:350px;height:1px;background:#dcdcdc;"></div>
<span class="t " style="left:3.00px;top:205.40px;font-size:9.9px;color:#000;transform:scaleX(0.9000);">8</span>
<span class="t " style="left:95.55px;top:205.40px;font-size:9.9px;color:#000;transform:scaleX(0.9000);">6</span>
<span class="t " style="left:105.00px;top:205.40px;font-size:9.9px;color:#000;transform:scaleX(0.8938);">SAN ROMANO IN GARFAGNANA</span>
<span class="t " style="left:349.00px;top:205.40px;font-size:9.9px;color:#000;transform:scaleX(0.9082);">460</span>
<div class="b " style="left:16px;top:250.14999999999998px;width:350px;height:1px;background:#dcdcdc;"></div>
<span class="t " style="left:3.00px;top:231.10px;font-size:9.9px;color:#000;transform:scaleX(0.9000);">9</span>
<span class="t " style="left:90.59px;top:231.10px;font-size:9.9px;color:#000;transform:scaleX(0.9000);">33</span>
<span class="t " style="left:105.00px;top:231.10px;font-size:9.9px;color:#000;transform:scaleX(0.8358);">PORCARI</span>
<span class="t " style="left:349.00px;top:231.10px;font-size:9.9px;color:#000;transform:scaleX(0.9082);">460</span>
<div class="b " style="left:16px;top:275.85px;width:350px;height:1px;background:#dcdcdc;"></div>
<span class="t " style="left:3.00px;top:256.80px;font-size:9.9px;color:#000;transform:scaleX(0.9000);">10</span>
<span class="t " style="left:95.55px;top:256.80px;font-size:9.9px;color:#000;transform:scaleX(0.9000);">8</span>
<span class="t " style="left:105.00px;top:256.80px;font-size:9.9px;color:#000;transform:scaleX(0.8519);">PIEVE FOSCIANA</span>
<span class="t " style="left:349.00px;top:256.80px;font-size:9.9px;color:#000;transform:scaleX(0.9082);">460</span>
<div class="b " style="left:16px;top:301.55px;width:350px;height:1px;background:#dcdcdc;"></div>
<span class="t " style="left:3.00px;top:282.50px;font-size:9.9px;color:#000;transform:scaleX(0.9000);">11</span>
<span class="t " style="left:90.59px;top:282.50px;font-size:9.9px;color:#000;transform:scaleX(0.9000);">23</span>
<span class="t " style="left:105.00px;top:282.50px;font-size:9.9px;color:#000;transform:scaleX(0.8482);">PIETRASANTA</span>
<span class="t " style="left:349.00px;top:282.50px;font-size:9.9px;color:#000;transform:scaleX(0.9082);">460</span>
<div class="b " style="left:16px;top:327.25px;width:350px;height:1px;background:#dcdcdc;"></div>
<span class="t " style="left:3.00px;top:308.20px;font-size:9.9px;color:#000;transform:scaleX(0.9000);">12</span>
<span class="t " style="left:95.55px;top:308.20px;font-size:9.9px;color:#000;transform:scaleX(0.9000);">3</span>
<span class="t " style="left:105.00px;top:308.20px;font-size:9.9px;color:#000;transform:scaleX(0.8518);">PIAZZA AL SERCHIO</span>
<span class="t " style="left:349.00px;top:308.20px;font-size:9.9px;color:#000;transform:scaleX(0.9082);">460</span>
<div class="b " style="left:16px;top:352.95px;width:350px;height:1px;background:#dcdcdc;"></div>
<span class="t " style="left:3.00px;top:333.90px;font-size:9.9px;color:#000;transform:scaleX(0.9000);">13</span>
<span class="t " style="left:90.59px;top:333.90px;font-size:9.9px;color:#000;transform:scaleX(0.9000);">24</span>
<span class="t " style="left:105.00px;top:333.90px;font-size:9.9px;color:#000;transform:scaleX(0.8196);">PESCAGLIA</span>
<span class="t " style="left:349.00px;top:333.90px;font-size:9.9px;color:#000;transform:scaleX(0.9082);">460</span>
<div class="b " style="left:16px;top:378.65px;width:350px;height:1px;background:#dcdcdc;"></div>
<span class="t " style="left:3.00px;top:359.60px;font-size:9.9px;color:#000;transform:scaleX(0.9000);">14</span>
<span class="t " style="left:90.59px;top:359.60px;font-size:9.9px;color:#000;transform:scaleX(0.9000);">31</span>
<span class="t " style="left:105.00px;top:359.60px;font-size:9.9px;color:#000;transform:scaleX(0.8589);">MONTECARLO</span>
<span class="t " style="left:349.00px;top:359.60px;font-size:9.9px;color:#000;transform:scaleX(0.9082);">460</span>
<div class="b " style="left:16px;top:404.35px;width:350px;height:1px;background:#dcdcdc;"></div>
<span class="t " style="left:3.00px;top:385.30px;font-size:9.9px;color:#000;transform:scaleX(0.9000);">15</span>
<span class="t " style="left:90.59px;top:385.30px;font-size:9.9px;color:#000;transform:scaleX(0.9000);">17</span>
<span class="t " style="left:105.00px;top:385.30px;font-size:9.9px;color:#000;transform:scaleX(0.8974);">MOLAZZANA</span>
<span class="t " style="left:349.00px;top:385.30px;font-size:9.9px;color:#000;transform:scaleX(0.9082);">460</span>
<div class="b " style="left:16px;top:430.04999999999995px;width:350px;height:1px;background:#dcdcdc;"></div>
<span class="t " style="left:3.00px;top:411.00px;font-size:9.9px;color:#000;transform:scaleX(0.9000);">16</span>
<span class="t " style="left:95.55px;top:411.00px;font-size:9.9px;color:#000;transform:scaleX(0.9000);">7</span>
<span class="t " style="left:105.00px;top:411.00px;font-size:9.9px;color:#000;transform:scaleX(0.9044);">MINUCCIANO</span>
<span class="t " style="left:349.00px;top:411.00px;font-size:9.9px;color:#000;transform:scaleX(0.9082);">460</span>
<div class="b " style="left:16px;top:455.75px;width:350px;height:1px;background:#dcdcdc;"></div>
<span class="t " style="left:3.00px;top:436.70px;font-size:9.9px;color:#000;transform:scaleX(0.9000);">17</span>
<span class="t " style="left:90.59px;top:436.70px;font-size:9.9px;color:#000;transform:scaleX(0.9000);">29</span>
<span class="t " style="left:105.00px;top:436.70px;font-size:9.9px;color:#000;transform:scaleX(0.8562);">MASSAROSA</span>
<span class="t " style="left:349.00px;top:436.70px;font-size:9.9px;color:#000;transform:scaleX(0.9082);">460</span>
<div class="b " style="left:16px;top:481.45000000000005px;width:350px;height:1px;background:#dcdcdc;"></div>
<span class="t " style="left:3.00px;top:462.40px;font-size:9.9px;color:#000;transform:scaleX(0.9000);">18</span>
<span class="t " style="left:90.59px;top:462.40px;font-size:9.9px;color:#000;transform:scaleX(0.9000);">28</span>
<span class="t " style="left:105.00px;top:462.40px;font-size:9.9px;color:#000;transform:scaleX(0.8076);">LUCCA</span>
<span class="t " style="left:349.00px;top:462.40px;font-size:9.9px;color:#000;transform:scaleX(0.9082);">460</span>
<div class="b " style="left:16px;top:507.15px;width:350px;height:1px;background:#dcdcdc;"></div>
<span class="t " style="left:3.00px;top:488.10px;font-size:9.9px;color:#000;transform:scaleX(0.9000);">19</span>
<span class="t " style="left:90.59px;top:488.10px;font-size:9.9px;color:#000;transform:scaleX(0.9000);">19</span>
<span class="t " style="left:105.00px;top:488.10px;font-size:9.9px;color:#000;transform:scaleX(0.8647);">GALLICANO</span>
<span class="t " style="left:349.00px;top:488.10px;font-size:9.9px;color:#000;transform:scaleX(0.9082);">460</span>
<div class="b " style="left:16px;top:532.85px;width:350px;height:1px;background:#dcdcdc;"></div>
<span class="t " style="left:3.00px;top:513.80px;font-size:9.9px;color:#000;transform:scaleX(0.9000);">20</span>
<span class="t " style="left:90.59px;top:513.80px;font-size:9.9px;color:#000;transform:scaleX(0.9000);">10</span>
<span class="t " style="left:105.00px;top:513.80px;font-size:9.9px;color:#000;transform:scaleX(0.8608);">FOSCIANDORA</span>
<span class="t " style="left:349.00px;top:513.80px;font-size:9.9px;color:#000;transform:scaleX(0.9082);">460</span>
<div class="b " style="left:16px;top:558.55px;width:350px;height:1px;background:#dcdcdc;"></div>
<span class="t " style="left:3.00px;top:539.50px;font-size:9.9px;color:#000;transform:scaleX(0.9000);">21</span>
<span class="t " style="left:90.59px;top:539.50px;font-size:9.9px;color:#000;transform:scaleX(0.9000);">26</span>
<span class="t " style="left:105.00px;top:539.50px;font-size:9.9px;color:#000;transform:scaleX(0.8578);">FORTE DEI MARMI</span>
<span class="t " style="left:349.00px;top:539.50px;font-size:9.9px;color:#000;transform:scaleX(0.9082);">460</span>
<div class="b " style="left:16px;top:584.25px;width:350px;height:1px;background:#dcdcdc;"></div>
<span class="t " style="left:3.00px;top:565.20px;font-size:9.9px;color:#000;transform:scaleX(0.9000);">22</span>
<span class="t " style="left:90.59px;top:565.20px;font-size:9.9px;color:#000;transform:scaleX(0.9000);">21</span>
<span class="t " style="left:105.00px;top:565.20px;font-size:9.9px;color:#000;transform:scaleX(0.8345);">FABBRICHE DI VERGEMOLI</span>
<span class="t " style="left:349.00px;top:565.20px;font-size:9.9px;color:#000;transform:scaleX(0.9082);">460</span>
<div class="b " style="left:16px;top:0px;width:1px;height:571px;background:#ececec;"></div>
<div class="b " style="left:102px;top:0px;width:1px;height:571px;background:#e2e2e2;"></div>
<div class="b " style="left:347px;top:0px;width:1px;height:571px;background:#e2e2e2;"></div>
</div>
<div class="b " style="left:1319px;top:122px;width:13px;height:571px;background:#f0f0f0;"></div>
<div class="b " style="left:1320px;top:137px;width:12px;height:343px;background:#cdcdcd;"></div>
<svg class="i" style="left:1321px;top:126px;" width="9" height="6" viewBox="0 0 9 6"><path d="M0.8 5l3.7-3.8 3.7 3.8" stroke="#333" stroke-width="1.3" fill="none"/></svg>
<svg class="i" style="left:1321px;top:683px;" width="9" height="6" viewBox="0 0 9 6"><path d="M0.8 1l3.7 3.8 3.7-3.8" stroke="#333" stroke-width="1.3" fill="none"/></svg>
<div class="b " style="left:953px;top:693px;width:379px;height:14px;background:#f0f0f0;"></div>
<div class="b " style="left:967px;top:694px;width:84px;height:13px;background:#cdcdcd;"></div>
<svg class="i" style="left:956px;top:696px;" width="6" height="9" viewBox="0 0 6 9"><path d="M5 0.8l-3.8 3.7 3.8 3.7" stroke="#333" stroke-width="1.3" fill="none"/></svg>
<svg class="i" style="left:1308px;top:696px;" width="6" height="9" viewBox="0 0 6 9"><path d="M1 0.8l3.8 3.7-3.8 3.7" stroke="#333" stroke-width="1.3" fill="none"/></svg>
<div class="b " style="left:955px;top:710px;width:101px;height:16px;background:#e1e1e1;border:1px solid #cfcfcf;"></div>
<svg class="i" style="left:958.5px;top:711.5px;" width="13" height="13" viewBox="0 0 16 16"><path d="M1 3h14l-5.500 6v6l-3-1.500V9z" fill="#4d83c3"/><rect x="1" y="1.200" width="14" height="2.200" fill="#f0c92c"/></svg>
<span class="t " style="left:975.00px;top:711.00px;font-size:9.9px;color:#000;transform:scaleX(0.9525);">Show All Features</span>
<svg class="i" style="left:1049px;top:720px;" width="5" height="4" viewBox="0 0 5 4"><path d="M0 0h5l-2.5 3z" fill="#111"/></svg>
<svg class="i" style="left:1295.5px;top:711.5px;" width="13" height="13" viewBox="0 0 16 16"><rect x="1" y="1.500" width="14" height="13" rx="1" fill="#eef4fa" stroke="#9ec3e6" stroke-width="1"/><path d="M3 5h3M3 8h3M3 11h3" stroke="#9ec3e6" stroke-width="1.200"/><rect x="7.500" y="4" width="6" height="2" fill="#c6dcf0"/><rect x="7.500" y="7" width="6" height="2" fill="#c6dcf0"/><rect x="7.500" y="10" width="6" height="2" fill="#c6dcf0"/></svg>
<div class="b " style="left:1313px;top:710px;width:18px;height:16px;background:#cce4f7;border:1px solid #3a8ee6;"></div>
<svg class="i" style="left:1315.5px;top:711.5px;" width="13" height="13" viewBox="0 0 16 16"><rect x="1" y="1.5" width="14" height="13" rx="1" fill="#cfe3f6" stroke="#8fbce6" stroke-width="0.9"/><path d="M1 5h14M5.5 5v9.5M1.5 8.2h13M1.5 11.3h13" stroke="#8fbce6" stroke-width="0.9"/><rect x="1.5" y="2" width="13" height="3" fill="#a6cdef"/></svg>
<div class="b " style="left:0px;top:729px;width:1333px;height:21px;background:#f2f2f2;"></div>
<div class="b " style="left:3px;top:732px;width:145px;height:16px;background:#fff;border:1px solid #c6c6c6;"></div>
<svg class="i" style="left:7px;top:735px;" width="10" height="10" viewBox="0 0 10 10"><circle cx="4" cy="4" r="3" stroke="#8a8a8a" stroke-width="1.1" fill="none"/><path d="M6.2 6.2l3 3" stroke="#8a8a8a" stroke-width="1.2"/></svg>
<span class="t " style="left:22.00px;top:733.00px;font-size:9.9px;color:#8c8c8c;transform:scaleX(0.9619);">Type to locate (Ctrl+K)</span>
<span class="t " style="left:152.00px;top:733.00px;font-size:9.9px;color:#000;transform:scaleX(0.9719);">0 feature(s) selected on layer com_prov_lucca.</span>
<span class="t " style="left:650.00px;top:733.00px;font-size:9.9px;color:#000;transform:scaleX(0.9912);">Coordinate</span>
<div class="b " style="left:700px;top:732px;width:107px;height:16px;background:#fff;border:1px solid #adadad;"></div>
<span class="t " style="left:717.50px;top:733.00px;font-size:9.9px;color:#000;transform:scaleX(0.9020);">1624666,4895031</span>
<svg class="i" style="left:809.0px;top:733.0px;" width="14" height="14" viewBox="0 0 16 16"><rect x="4" y="2" width="8" height="12" rx="3.600" fill="#fff" stroke="#333" stroke-width="1.200"/><path d="M8 2v5M4 7h8" stroke="#333" stroke-width="1"/><path d="M1.500 14.500L14 1.500" stroke="#333" stroke-width="1.100"/><circle cx="12.500" cy="12.500" r="2.300" fill="none" stroke="#333" stroke-width="0.900"/></svg>
<span class="t " style="left:831.00px;top:733.00px;font-size:9.9px;color:#000;transform:scaleX(0.8884);">Scale</span>
<div class="b " style="left:856px;top:731px;width:68px;height:17px;background:#fff;border:1px solid #adadad;"></div>
<span class="t " style="left:860.00px;top:733.00px;font-size:9.9px;color:#000;transform:scaleX(0.9083);">1:317.284</span>
<svg class="i" style="left:913px;top:737px;" width="8" height="6" viewBox="0 0 8 6"><path d="M0.7 1l3.3 3.4 3.3-3.4" stroke="#444" stroke-width="1.1" fill="none"/></svg>
<svg class="i" style="left:926.5px;top:733.5px;" width="13" height="13" viewBox="0 0 16 16"><path d="M4 8V5.200a4 4 0 0 1 8 0V8" fill="none" stroke="#9a9a9a" stroke-width="1.700"/><rect x="2.200" y="7.500" width="11.600" height="8" rx="1" fill="#6e6e6e"/></svg>
<span class="t " style="left:950.00px;top:733.00px;font-size:9.9px;color:#000;transform:scaleX(0.9825);">Magnifier</span>
<div class="b " style="left:993px;top:732px;width:60px;height:16px;background:#fff;border:1px solid #adadad;"></div>
<span class="t " style="left:996.00px;top:733.00px;font-size:9.9px;color:#000;transform:scaleX(0.9479);">100%</span>
<div class="b " style="left:1041px;top:733px;width:11px;height:14px;background:#f0f0f0;border:1px solid #c8c8c8;"></div>
<svg class="i" style="left:1042.5px;top:734px;" width="8" height="12" viewBox="0 0 8 12"><path d="M1 4.5l3-3.5 3 3.5z M1 7.5l3 3.5 3-3.5z" fill="#222"/></svg>
<span class="t " style="left:1059.00px;top:733.00px;font-size:9.9px;color:#000;transform:scaleX(0.9764);">Rotation</span>
<div class="b " style="left:1100px;top:732px;width:59px;height:16px;background:#fff;border:1px solid #adadad;"></div>
<span class="t " style="left:1103.00px;top:733.00px;font-size:9.9px;color:#000;transform:scaleX(0.9282);">0.0 °</span>
<div class="b " style="left:1147px;top:733px;width:11px;height:14px;background:#f0f0f0;border:1px solid #c8c8c8;"></div>
<svg class="i" style="left:1148.5px;top:734px;" width="8" height="12" viewBox="0 0 8 12"><path d="M1 4.5l3-3.5 3 3.5z M1 7.5l3 3.5 3-3.5z" fill="#222"/></svg>
<div class="b " style="left:1164px;top:734.0px;width:12px;height:12px;background:#fff;border:1px solid #4a4a4a;"></div>
<svg class="i" style="left:1164px;top:734.0px;" width="12" height="12" viewBox="0 0 12 12"><path d="M2.6 6.2l2.4 2.5 4.6-5.2" stroke="#222" stroke-width="1.1" fill="none"/></svg>
<span class="t " style="left:1179.00px;top:733.00px;font-size:9.9px;color:#000;transform:scaleX(0.9548);">Render</span>
<svg class="i" style="left:1222.0px;top:733.0px;" width="14" height="14" viewBox="0 0 16 16"><ellipse cx="8" cy="8" rx="7" ry="5.500" fill="#e9e9e9" stroke="#666" stroke-width="1"/><path d="M1 8h14M8 2.500v11M3 4.500c3 1.500 7 1.500 10 0M3 11.500c3-1.500 7-1.500 10 0" fill="none" stroke="#666" stroke-width="0.800"/><ellipse cx="8" cy="8" rx="3.200" ry="5.500" fill="none" stroke="#666" stroke-width="0.800"/></svg>
<span class="t " style="left:1240.00px;top:733.00px;font-size:9.9px;color:#000;transform:scaleX(0.8224);">EPSG:3003</span>
<svg class="i" style="left:1294.0px;top:733.0px;" width="14" height="14" viewBox="0 0 16 16"><path d="M8 1.500c4 0 7 2.400 7 5.500s-3 5.500-7 5.500c-0.700 0-1.400-0.100-2-0.200L2.500 15l1-3.500C2 10.400 1 8.800 1 7c0-3.100 3-5.500 7-5.500z" fill="#5a5a5a"/><circle cx="5" cy="7" r="0.900" fill="#ddd"/><circle cx="8" cy="7" r="0.900" fill="#ddd"/><circle cx="11" cy="7" r="0.900" fill="#ddd"/></svg>
<svg class="i" style="left:1318.0px;top:733.0px;" width="14" height="14" viewBox="0 0 16 16"><path d="M2 7h4V5a2 2 0 1 1 4 0v2h4.500v3.500h-1.500a1.800 1.800 0 1 0 0 3.500H14.500V15H2z" fill="#c4c4c4" stroke="#8a8a8a" stroke-width="0.900"/><path d="M9 3L15 0.500" stroke="#8a8a8a" stroke-width="1.200"/></svg>
<div class="b " style="left:0px;top:748px;width:1333px;height:2px;background:#1a1a1a;"></div>
</div></body></html>
